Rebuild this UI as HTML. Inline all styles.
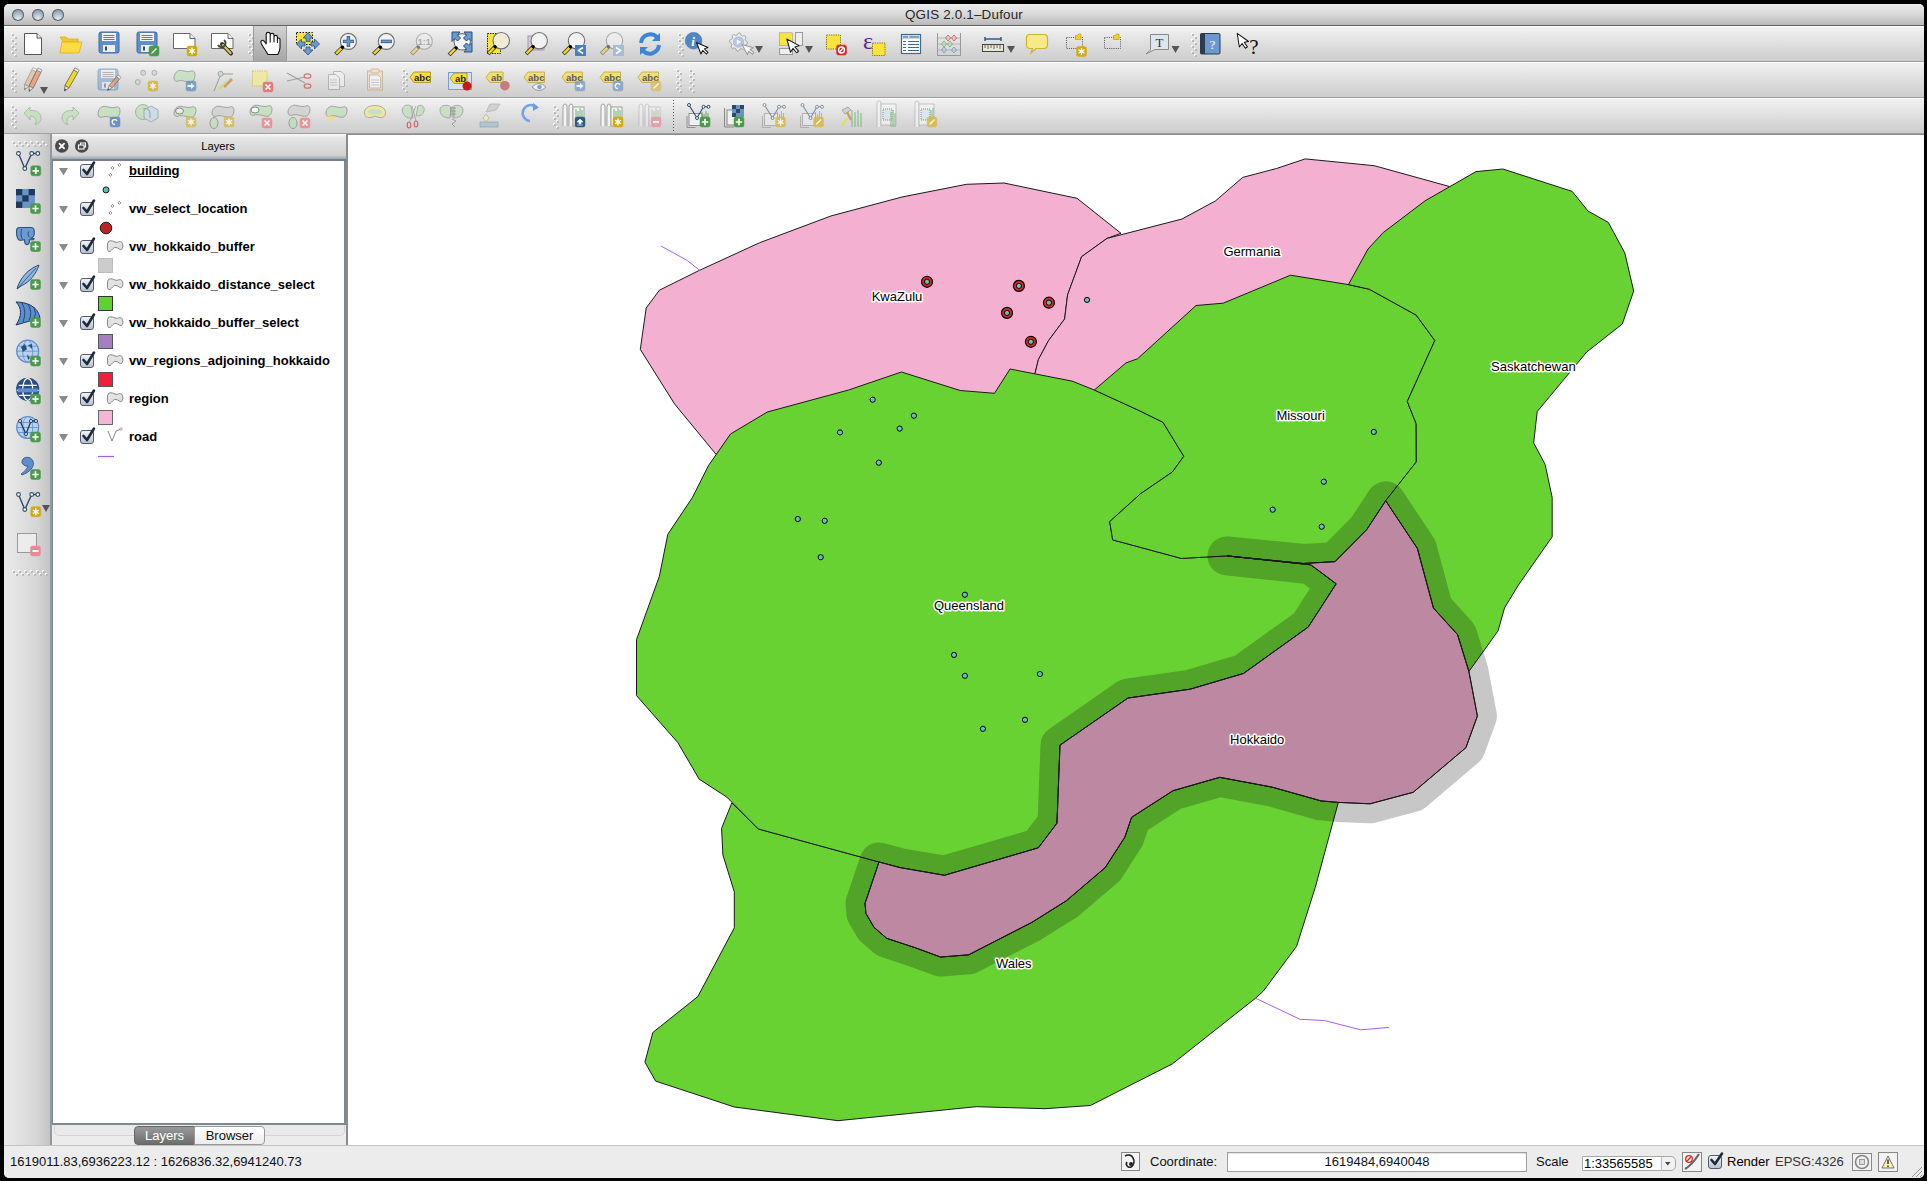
<!DOCTYPE html>
<html><head><meta charset="utf-8">
<style>
*{margin:0;padding:0;box-sizing:border-box}
html,body{width:1927px;height:1181px;overflow:hidden;background:#000;font-family:"Liberation Sans",sans-serif}
.a{position:absolute}
#win{position:absolute;left:4px;top:4px;width:1920px;height:1174px;background:#ececec;border-radius:5px 5px 5px 5px}
#title{position:absolute;left:4px;top:4px;width:1920px;height:22px;background:linear-gradient(#ececec,#d8d8d8 50%,#b9b9b9);border-bottom:1px solid #626262;border-radius:5px 5px 0 0}
#title .t{position:absolute;left:0;width:1920px;top:3px;text-align:center;font-size:13.4px;color:#262626;letter-spacing:0.2px}
.light{position:absolute;top:5px;width:12px;height:12px;border-radius:50%;background:radial-gradient(circle at 50% 80%,#e4eaee 0,#a9b7c1 50%,#6c7d89 100%);box-shadow:0 0 0 1px #56636d inset}
.tb{position:absolute;left:4px;width:1920px;height:36px;background:linear-gradient(#f2f2f2,#dedede 50%,#cdcdcd);border-bottom:1px solid #9e9e9e;border-top:1px solid #fdfdfd}
#ltb{position:absolute;left:4px;top:134px;width:48px;height:1011px;background:linear-gradient(90deg,#ebebeb,#d6d6d6 70%,#c4c4c4);border-right:2px solid #8f9aa6}
#dockh{position:absolute;left:52px;top:134px;width:294px;height:27px;background:linear-gradient(#f8f8f8,#e6e6e6 15%,#d2d2d2 85%,#9aa4ae);border-bottom:2px solid #74808c}
#dockh .t{position:absolute;left:0;width:294px;top:6px;text-align:center;font-size:11.2px;color:#000;padding-left:38px}
#list{position:absolute;left:52px;top:161px;width:294px;height:964px;background:#fff;border-left:1px solid #7d8893;border-right:2px solid #7d8893;border-bottom:2px solid #7d8893}
#tabs{position:absolute;left:52px;top:1125px;width:294px;height:20px;background:#ececec}
#mapbg{position:absolute;left:346px;top:134px;width:1578px;height:1011px;background:#fff;border-left:2px solid #8b8b8b;border-top:1px solid #8b8b8b}
#status{position:absolute;left:4px;top:1145px;width:1920px;height:33px;background:#ececec;border-top:1px solid #c3c3c3;border-radius:0 0 5px 5px}
.lt{position:absolute;left:129px;font-size:13px;font-weight:bold;color:#000;white-space:nowrap}
.st{position:absolute;font-size:13px;color:#111;white-space:nowrap}
</style></head><body>
<div id="win"></div>
<div id="title"><div class="t">QGIS 2.0.1&#8211;Dufour</div>
  <div class="light" style="left:8px"></div><div class="light" style="left:28px"></div><div class="light" style="left:48px"></div>
</div>
<div class="tb" style="top:26px"></div>
<div class="tb" style="top:62px"></div>
<div class="tb" style="top:98px"></div>
<div id="ltb"></div>
<div id="dockh"><div class="t">Layers</div></div>
<div id="list"></div>
<div id="tabs"></div>
<div class="a" style="left:54px;top:1125px;width:291px;height:11px;background:#e9e9e9;border:1px solid #d4d4d4;border-top:none;border-radius:0 0 5px 5px"></div>
<div id="mapbg"></div>
<div id="status"></div>
<div class="st" style="left:10px;top:1154px">1619011.83,6936223.12 : 1626836.32,6941240.73</div>
<div class="st" style="left:1150px;top:1154px">Coordinate:</div>
<div class="a" style="left:1227px;top:1152px;width:300px;height:20px;background:#fff;border:1px solid #a0a0a0;box-shadow:inset 0 1px 1px rgba(0,0,0,.12)"></div>
<div class="st" style="left:1227px;width:300px;text-align:center;top:1154px">1619484,6940048</div>
<div class="st" style="left:1536px;top:1154px">Scale</div>
<div class="a" style="left:1582px;top:1156px;width:94px;height:15px;background:linear-gradient(90deg,#fff 84%,#f2f2f2 84%);border:1px solid #a8a8a8;border-radius:0 5px 5px 0"></div>
<div class="st" style="left:1584px;top:1156px;font-size:13px;color:#000">1:33565585</div>
<div class="st" style="left:1727px;top:1154px;color:#000">Render</div>
<div class="st" style="left:1775px;top:1154px;color:#333">EPSG:4326</div>
<div class="lt" style="top:163px;text-decoration:underline;">building</div>
<div class="lt" style="top:201px;">vw_select_location</div>
<div class="lt" style="top:239px;">vw_hokkaido_buffer</div>
<div class="lt" style="top:277px;">vw_hokkaido_distance_select</div>
<div class="lt" style="top:315px;">vw_hokkaido_buffer_select</div>
<div class="lt" style="top:353px;">vw_regions_adjoining_hokkaido</div>
<div class="lt" style="top:391px;">region</div>
<div class="lt" style="top:429px;">road</div>
<div class="a" style="left:134px;top:1126px;width:61px;height:19px;background:linear-gradient(#9a9a9a,#6c6c6c);border:1px solid #666;border-radius:4px 0 0 4px;color:#fff;font-size:13px;text-align:center;line-height:17px">Layers</div>
<div class="a" style="left:194px;top:1126px;width:71px;height:19px;background:linear-gradient(#ffffff,#ececec);border:1px solid #999;border-radius:0 4px 4px 0;color:#111;font-size:13px;text-align:center;line-height:17px">Browser</div>
<svg class="a" style="left:0;top:0" width="1927" height="1181" viewBox="0 0 1927 1181">
<rect x="11" y="33" width="2" height="2" fill="#fff" opacity=".85"/><rect x="12" y="34" width="2" height="2" fill="#b9b9b9"/><rect x="14" y="36" width="2" height="2" fill="#fff" opacity=".85"/><rect x="15" y="37" width="2" height="2" fill="#b9b9b9"/><rect x="11" y="39" width="2" height="2" fill="#fff" opacity=".85"/><rect x="12" y="40" width="2" height="2" fill="#b9b9b9"/><rect x="14" y="42" width="2" height="2" fill="#fff" opacity=".85"/><rect x="15" y="43" width="2" height="2" fill="#b9b9b9"/><rect x="11" y="45" width="2" height="2" fill="#fff" opacity=".85"/><rect x="12" y="46" width="2" height="2" fill="#b9b9b9"/><rect x="14" y="48" width="2" height="2" fill="#fff" opacity=".85"/><rect x="15" y="49" width="2" height="2" fill="#b9b9b9"/><rect x="11" y="51" width="2" height="2" fill="#fff" opacity=".85"/><rect x="12" y="52" width="2" height="2" fill="#b9b9b9"/><rect x="14" y="54" width="2" height="2" fill="#fff" opacity=".85"/><rect x="15" y="55" width="2" height="2" fill="#b9b9b9"/>
<path d="M24.5,33.5H37L41.5,38V54.5H24.5Z" fill="#fff" stroke="#555"/><path d="M37,33.5V38H41.5" fill="#eee" stroke="#555"/>
<path d="M60,37H66L68,39H78V42H63Z" fill="#f2c829" stroke="#d8b020" stroke-width=".8"/><path d="M62,42H82L79,53H60Z" fill="#fcdb44" stroke="#d8b020" stroke-width=".8"/>
<g opacity="1"><rect x="99" y="32" width="20" height="21" rx="2" fill="#5e8fcd" stroke="#3b6aa8"/><rect x="102" y="33" width="14" height="8" fill="#f4f4f4"/><path d="M103.5,35.5H114.5M103.5,37.5H114.5M103.5,39.5H114.5" stroke="#555" stroke-width=".8"/><rect x="103" y="45" width="12" height="7" fill="#eee"/><rect x="105" y="46.5" width="2" height="4" fill="#2c4c78"/></g>
<g opacity="1"><rect x="137" y="32" width="20" height="21" rx="2" fill="#5e8fcd" stroke="#3b6aa8"/><rect x="140" y="33" width="14" height="8" fill="#f4f4f4"/><path d="M141.5,35.5H152.5M141.5,37.5H152.5M141.5,39.5H152.5" stroke="#555" stroke-width=".8"/><rect x="141" y="45" width="12" height="7" fill="#eee"/><rect x="143" y="46.5" width="2" height="4" fill="#2c4c78"/></g><g opacity="1"><rect x="149" y="46" width="10" height="10" rx="2" fill="#4b9a4b" stroke="#4b9a4b" stroke-width=".5"/><path d="M151,54L152,52L156,48L157,49L153,53Z" fill="#fff"/></g>
<path d="M173.5,33.5H190L195,38.5V48.5H173.5Z" fill="#fff" stroke="#666"/><path d="M190,33.5V38.5H195" fill="#eee" stroke="#666"/><g opacity="1"><rect x="187" y="46" width="10" height="10" rx="2" fill="#d4a90e" stroke="#d4a90e" stroke-width=".5"/><path d="M192,47.5V54.5M189,49.2L195,52.8M195,49.2L189,52.8" stroke="#fff" stroke-width="1.3"/><circle cx="192" cy="51" r="1.8" fill="#fff"/></g>
<path d="M211.5,33.5H228L233,38.5V48.5H211.5Z" fill="#fff" stroke="#666"/><path d="M228,33.5V38.5H233" fill="#eee" stroke="#666"/>
<path d="M222,44L231,53.5" stroke="#333" stroke-width="4" stroke-linecap="round"/><path d="M223,45L230.5,53" stroke="#e6c44a" stroke-width="2.2" stroke-linecap="round"/><path d="M224,40A4,4 0 1 1 218,45" fill="none" stroke="#444" stroke-width="2"/>
<rect x="248" y="33" width="2" height="2" fill="#fff" opacity=".85"/><rect x="249" y="34" width="2" height="2" fill="#b9b9b9"/><rect x="251" y="36" width="2" height="2" fill="#fff" opacity=".85"/><rect x="252" y="37" width="2" height="2" fill="#b9b9b9"/><rect x="248" y="39" width="2" height="2" fill="#fff" opacity=".85"/><rect x="249" y="40" width="2" height="2" fill="#b9b9b9"/><rect x="251" y="42" width="2" height="2" fill="#fff" opacity=".85"/><rect x="252" y="43" width="2" height="2" fill="#b9b9b9"/><rect x="248" y="45" width="2" height="2" fill="#fff" opacity=".85"/><rect x="249" y="46" width="2" height="2" fill="#b9b9b9"/><rect x="251" y="48" width="2" height="2" fill="#fff" opacity=".85"/><rect x="252" y="49" width="2" height="2" fill="#b9b9b9"/><rect x="248" y="51" width="2" height="2" fill="#fff" opacity=".85"/><rect x="249" y="52" width="2" height="2" fill="#b9b9b9"/><rect x="251" y="54" width="2" height="2" fill="#fff" opacity=".85"/><rect x="252" y="55" width="2" height="2" fill="#b9b9b9"/>
<defs><linearGradient id="pg" x1="0" y1="0" x2="0" y2="1"><stop offset="0" stop-color="#d2d2d2"/><stop offset="1" stop-color="#a6a6a6"/></linearGradient></defs>
<rect x="253" y="26" width="34" height="35" fill="url(#pg)"/><path d="M253.5,26V61M286.5,26V61" stroke="#9a9a9a"/>
<path d="M268,54.5 C266,51 263,47 261.2,43.5 C260.2,41 262,39.2 264,41 L266.2,43.8 V34.2 C266.2,31.8 270.2,31.8 270.2,34.2 V42 V35.2 C270.2,32.8 274,32.8 274,35.2 V42 V37 C274,34.8 277.4,34.8 277.4,37 V42.5 V39.5 C277.4,37.6 280,37.6 280,39.5 V47.5 C280,50.5 278.8,52.5 277.8,54.5 Z" fill="#fff" stroke="#111" stroke-width="1.1" stroke-linejoin="round"/>
<rect x="296.5" y="32.5" width="16" height="12" fill="#f8e43a" stroke="#111" stroke-width="1" stroke-dasharray="1.5 1.5"/>
<g fill="#6a9ad0" stroke="#2a4e7e" stroke-width=".8" stroke-linejoin="round"><path d="M308,32.8L313,38H310V41.5H306V38H303Z"/><path d="M296.5,44L301.5,39V42H305V46H301.5V49Z"/><path d="M319.5,44L314.5,39V42H311V46H314.5V49Z"/><path d="M308,55L303,50H306V47H310V50H313Z"/></g>
<g opacity="1"><path d="M342.47999999999996,47.32L335.59999999999997,54.2" stroke="#2b2b3a" stroke-width="4" stroke-linecap="butt"/><path d="M341.67999999999995,48.12L336.09999999999997,53.7" stroke="#f7d21a" stroke-width="2.6"/><circle cx="348.4" cy="41.4" r="8" fill="#f2f2f2" stroke="#6e6e6e" stroke-width="1.1"/><circle cx="342.47999999999996" cy="47.32" r="1.7" fill="#000"/><path d="M348.4,36V47M342.9,41.4H353.9" stroke="#2a4e7e" stroke-width="3.4"/><path d="M348.4,36.6V46.4M343.5,41.4H353.3" stroke="#6a9ad0" stroke-width="2"/></g>
<g opacity="1"><path d="M380.38,47.32L373.5,54.2" stroke="#2b2b3a" stroke-width="4" stroke-linecap="butt"/><path d="M379.58,48.12L374.0,53.7" stroke="#f7d21a" stroke-width="2.6"/><circle cx="386.3" cy="41.4" r="8" fill="#f2f2f2" stroke="#6e6e6e" stroke-width="1.1"/><circle cx="380.38" cy="47.32" r="1.7" fill="#000"/><path d="M380.8,41.4H391.8" stroke="#2a4e7e" stroke-width="3.4"/><path d="M381.4,41.4H391.2" stroke="#6a9ad0" stroke-width="2"/></g>
<g opacity="0.45"><path d="M418.38,47.120000000000005L411.5,54.0" stroke="#2b2b3a" stroke-width="4" stroke-linecap="butt"/><path d="M417.58,47.92L412.0,53.5" stroke="#f7d21a" stroke-width="2.6"/><circle cx="424.3" cy="41.2" r="8" fill="#f2f2f2" stroke="#6e6e6e" stroke-width="1.1"/><circle cx="418.38" cy="47.120000000000005" r="1.7" fill="#000"/><text x="424.3" y="45" font-size="9" font-weight="bold" text-anchor="middle" fill="#666" font-family="Liberation Sans">1:1</text></g>
<g opacity="1"><path d="M456.132,47.867999999999995L449.08,54.919999999999995" stroke="#2b2b3a" stroke-width="4" stroke-linecap="butt"/><path d="M455.332,48.66799999999999L449.58,54.419999999999995" stroke="#f7d21a" stroke-width="2.6"/><circle cx="462.2" cy="41.8" r="8.2" fill="#f2f2f2" stroke="#6e6e6e" stroke-width="1.1"/><circle cx="456.132" cy="47.867999999999995" r="1.7" fill="#000"/></g>
<g fill="#6a9ad0" stroke="#2a4e7e" stroke-width="1" stroke-linejoin="round"><path d="M452,32H460L457.5,35L460.5,38L457.5,41L455,38.5L452,41.5Z"/><path d="M472,32H464L466.5,35L463.5,38L466.5,41L469,38.5L472,41.5Z"/><path d="M472,52H464L466.5,49L463.5,46L466.5,43L469,45.5L472,42.5Z"/></g>
<rect x="487.5" y="33.5" width="13" height="20" fill="#f6e53c" stroke="#222" stroke-dasharray="1.5 1"/><g opacity="1"><path d="M495.132,46.768L488.08,53.82" stroke="#2b2b3a" stroke-width="4" stroke-linecap="butt"/><path d="M494.332,47.568L488.58,53.32" stroke="#f7d21a" stroke-width="2.6"/><circle cx="501.2" cy="40.7" r="8.2" fill="#f2f2f2" stroke="#6e6e6e" stroke-width="1.1"/><circle cx="495.132" cy="46.768" r="1.7" fill="#000"/><circle cx="501.2" cy="40.7" r="7" fill="#efeacc" opacity=".8"/></g>
<rect x="528" y="36" width="16" height="14" fill="#d8c8d8" stroke="#a99aa9"/><g opacity="1"><path d="M533.1320000000001,46.768L526.08,53.82" stroke="#2b2b3a" stroke-width="4" stroke-linecap="butt"/><path d="M532.3320000000001,47.568L526.58,53.32" stroke="#f7d21a" stroke-width="2.6"/><circle cx="539.2" cy="40.7" r="8.2" fill="#f2f2f2" stroke="#6e6e6e" stroke-width="1.1"/><circle cx="533.1320000000001" cy="46.768" r="1.7" fill="#000"/></g>
<g opacity="1"><path d="M570.432,46.768L563.38,53.82" stroke="#2b2b3a" stroke-width="4" stroke-linecap="butt"/><path d="M569.6320000000001,47.568L563.88,53.32" stroke="#f7d21a" stroke-width="2.6"/><circle cx="576.5" cy="40.7" r="8.2" fill="#f2f2f2" stroke="#6e6e6e" stroke-width="1.1"/><circle cx="570.432" cy="46.768" r="1.7" fill="#000"/></g><rect x="575" y="45" width="11" height="11" fill="#4a7fc0"/><path d="M583,47.5L578.5,50.5L583,53.5" fill="none" stroke="#fff" stroke-width="1.6"/>
<g opacity="0.5"><path d="M608.432,46.768L601.38,53.82" stroke="#2b2b3a" stroke-width="4" stroke-linecap="butt"/><path d="M607.6320000000001,47.568L601.88,53.32" stroke="#f7d21a" stroke-width="2.6"/><circle cx="614.5" cy="40.7" r="8.2" fill="#f2f2f2" stroke="#6e6e6e" stroke-width="1.1"/><circle cx="608.432" cy="46.768" r="1.7" fill="#000"/></g><rect x="613" y="45" width="11" height="11" fill="#a3bcdb"/><path d="M616,47.5L620.5,50.5L616,53.5" fill="none" stroke="#fff" stroke-width="1.6"/>
<path d="M641,43 A9.5,9.5 0 0 1 657,37" fill="none" stroke="#3b86d8" stroke-width="4"/><path d="M660,33V41H652Z" fill="#3b86d8"/><path d="M659,45 A9.5,9.5 0 0 1 643,51" fill="none" stroke="#3b86d8" stroke-width="4"/><path d="M640,55V47H648Z" fill="#3b86d8"/>
<rect x="678" y="33" width="2" height="2" fill="#fff" opacity=".85"/><rect x="679" y="34" width="2" height="2" fill="#b9b9b9"/><rect x="681" y="36" width="2" height="2" fill="#fff" opacity=".85"/><rect x="682" y="37" width="2" height="2" fill="#b9b9b9"/><rect x="678" y="39" width="2" height="2" fill="#fff" opacity=".85"/><rect x="679" y="40" width="2" height="2" fill="#b9b9b9"/><rect x="681" y="42" width="2" height="2" fill="#fff" opacity=".85"/><rect x="682" y="43" width="2" height="2" fill="#b9b9b9"/><rect x="678" y="45" width="2" height="2" fill="#fff" opacity=".85"/><rect x="679" y="46" width="2" height="2" fill="#b9b9b9"/><rect x="681" y="48" width="2" height="2" fill="#fff" opacity=".85"/><rect x="682" y="49" width="2" height="2" fill="#b9b9b9"/><rect x="678" y="51" width="2" height="2" fill="#fff" opacity=".85"/><rect x="679" y="52" width="2" height="2" fill="#b9b9b9"/><rect x="681" y="54" width="2" height="2" fill="#fff" opacity=".85"/><rect x="682" y="55" width="2" height="2" fill="#b9b9b9"/>
<circle cx="693.6" cy="40.7" r="8.3" fill="#4f86c6" stroke="#3d6ea8" stroke-width=".6"/><text x="693" y="45.8" font-size="13" font-weight="bold" font-style="italic" text-anchor="middle" fill="#fff" font-family="Liberation Serif" style="text-rendering:geometricPrecision">i</text>
<g opacity="1" transform="translate(696.5,42.5) rotate(-21) scale(0.85)"><path d="M0,0V14.5L3.4,11.3L6,16.8L8.4,15.7L5.9,10.3H10.5Z" fill="#fff" stroke="#111" stroke-width="1.18" stroke-linejoin="round"/></g>
<g opacity=".8"><path d="M747.50,42.00 L747.33,43.76 L745.15,44.76 L744.49,46.00 L744.86,48.36 L743.50,49.48 L741.26,48.65 L739.90,49.06 L738.50,51.00 L736.74,50.83 L735.74,48.65 L734.50,47.99 L732.14,48.36 L731.02,47.00 L731.85,44.76 L731.44,43.40 L729.50,42.00 L729.67,40.24 L731.85,39.24 L732.51,38.00 L732.14,35.64 L733.50,34.52 L735.74,35.35 L737.10,34.94 L738.50,33.00 L740.26,33.17 L741.26,35.35 L742.50,36.01 L744.86,35.64 L745.98,37.00 L745.15,39.24 L745.56,40.60Z" fill="#eeeeee" stroke="#9a9a9a" stroke-width="1" stroke-linejoin="round"/><circle cx="738.5" cy="42" r="5.2" fill="#a9c2e0" stroke="#8aa4c4" stroke-width=".6"/><path d="M736.8,39.2V44.8L741,42Z" fill="#fff"/><g opacity="1" transform="translate(742,44.5) rotate(-28) scale(0.8)"><path d="M0,0V14.5L3.4,11.3L6,16.8L8.4,15.7L5.9,10.3H10.5Z" fill="#fff" stroke="#8a8a8a" stroke-width="1.25" stroke-linejoin="round"/></g></g>
<path d="M755,46H763L759,53Z" fill="#555"/>
<rect x="779.5" y="32.8" width="13" height="12.5" fill="#f8e43a" stroke="#999" stroke-width=".6"/><rect x="795.5" y="32.5" width="7" height="13" fill="#eee" stroke="#999"/><rect x="779.5" y="48.5" width="13" height="6" fill="#eee" stroke="#999"/>
<g opacity="1" transform="translate(786.8,39) rotate(-16) scale(0.95)"><path d="M0,0V14.5L3.4,11.3L6,16.8L8.4,15.7L5.9,10.3H10.5Z" fill="#fff" stroke="#111" stroke-width="1.05" stroke-linejoin="round"/></g>
<path d="M805,46H813L809,53Z" fill="#555"/>
<rect x="826.5" y="35" width="14" height="14" fill="#f8e43a" stroke="#8a7a10" stroke-dasharray="1.3 1"/><g opacity="1"><rect x="836.5" y="45" width="10" height="10" rx="2" fill="#d62828" stroke="#d62828" stroke-width=".5"/><circle cx="841.5" cy="50" r="3" fill="none" stroke="#fff" stroke-width="1.3"/><path d="M839.5,52L843.5,48" stroke="#fff" stroke-width="1.3"/></g>
<text x="863" y="48.5" font-size="24" fill="#5a2a80" font-family="Liberation Serif">&#949;</text><rect x="872.5" y="43" width="12.5" height="12.5" fill="#f8e43a" stroke="#8a7a10" stroke-dasharray="1.3 1"/>
<rect x="901.5" y="34.5" width="19" height="19" fill="#fff" stroke="#3e6a8f" stroke-width="1.2"/><rect x="902" y="35" width="18" height="4" fill="#c6d9ea"/><path d="M903,37H908M909.5,37H919M903,41.5H906M908,41.5H919M903,44.5H906M908,44.5H919M903,47.5H906M908,47.5H919M903,50.5H906M908,50.5H919" stroke="#3e6a8f" stroke-width="1.2"/>
<path d="M937.5,33V55M960.5,33V55M937,55.5H961" stroke="#999" stroke-width="1"/><path d="M938,38H960M938,44H960M938,50H960" stroke="#aaa" stroke-width=".8"/>
<g fill="none" stroke-width="1"><path d="M948,35L950.5,38L948,41L945.5,38Z M954,35L956.5,38L954,41L951.5,38Z" stroke="#d86a6a"/><path d="M944,41L946.5,44L944,47L941.5,44Z M950,41L952.5,44L950,47L947.5,44Z" stroke="#7ac07a"/><path d="M944,47L946.5,50L944,53L941.5,50Z M954,47L956.5,50L954,53L951.5,50Z" stroke="#7aa0d0"/></g>
<rect x="982.5" y="44.5" width="21" height="7" fill="#e8e8d8" stroke="#444"/><path d="M985,45V48M988,45V49M991,45V48M994,45V49M997,45V48M1000,45V49" stroke="#444" stroke-width=".8"/><path d="M985,39H1001M985,37V41M1001,37V41" stroke="#2c5f8a" stroke-width="1.5"/><path d="M1007,46H1015L1011,53Z" fill="#555"/>
<path d="M1030,34.5H1044Q1047.5,34.5 1047.5,38V45Q1047.5,48.5 1044,48.5H1036L1031,53L1032.5,48.5H1030Q1026.5,48.5 1026.5,45V38Q1026.5,34.5 1030,34.5Z" fill="#f6ea86" stroke="#cfb13a" stroke-width="1.2"/>
<rect x="1066.5" y="37.5" width="16" height="11" fill="none" stroke="#444" stroke-width=".9" stroke-dasharray="1 1.2"/><path d="M1075.5,39.5V35.5H1077.5L1078.5,34H1081V39.5Z" fill="#f2d020" stroke="#b89510" stroke-width=".6"/><g opacity="1"><rect x="1076.5" y="46.5" width="10" height="10" rx="2" fill="#d4a90e" stroke="#d4a90e" stroke-width=".5"/><path d="M1081.5,48.0V55.0M1078.5,49.7L1084.5,53.3M1084.5,49.7L1078.5,53.3" stroke="#fff" stroke-width="1.3"/><circle cx="1081.5" cy="51.5" r="1.8" fill="#fff"/></g>
<rect x="1104.5" y="37.5" width="16" height="11" fill="none" stroke="#444" stroke-width=".9" stroke-dasharray="1 1.2"/><path d="M1113.5,39.5V35.5H1115.5L1116.5,34H1119V39.5Z" fill="#f2d020" stroke="#b89510" stroke-width=".6"/>
<path d="M1150.5,34.5H1168.5V49.5H1155L1146,54L1151,49.5H1150.5Z" fill="#dde6ee" stroke="#888"/><text x="1159.5" y="47" font-size="13" text-anchor="middle" fill="#333" font-family="Liberation Serif">T</text><path d="M1171.5,46H1179.5L1175.5,53Z" fill="#555"/>
<rect x="1191" y="33" width="2" height="2" fill="#fff" opacity=".85"/><rect x="1192" y="34" width="2" height="2" fill="#b9b9b9"/><rect x="1194" y="36" width="2" height="2" fill="#fff" opacity=".85"/><rect x="1195" y="37" width="2" height="2" fill="#b9b9b9"/><rect x="1191" y="39" width="2" height="2" fill="#fff" opacity=".85"/><rect x="1192" y="40" width="2" height="2" fill="#b9b9b9"/><rect x="1194" y="42" width="2" height="2" fill="#fff" opacity=".85"/><rect x="1195" y="43" width="2" height="2" fill="#b9b9b9"/><rect x="1191" y="45" width="2" height="2" fill="#fff" opacity=".85"/><rect x="1192" y="46" width="2" height="2" fill="#b9b9b9"/><rect x="1194" y="48" width="2" height="2" fill="#fff" opacity=".85"/><rect x="1195" y="49" width="2" height="2" fill="#b9b9b9"/><rect x="1191" y="51" width="2" height="2" fill="#fff" opacity=".85"/><rect x="1192" y="52" width="2" height="2" fill="#b9b9b9"/><rect x="1194" y="54" width="2" height="2" fill="#fff" opacity=".85"/><rect x="1195" y="55" width="2" height="2" fill="#b9b9b9"/>
<rect x="1200.5" y="33.5" width="19.5" height="20.5" rx="1.2" fill="#6a98d0" stroke="#2a3a4a"/><rect x="1200.5" y="33.5" width="4.5" height="20.5" fill="#2c3c4e"/><text x="1212.5" y="48.5" font-size="13" text-anchor="middle" fill="#fff" font-family="Liberation Serif">?</text>
<g opacity="1" transform="translate(1237.2,33.4) rotate(-9) scale(0.95)"><path d="M0,0V14.5L3.4,11.3L6,16.8L8.4,15.7L5.9,10.3H10.5Z" fill="#fff" stroke="#111" stroke-width="1.05" stroke-linejoin="round"/></g><text x="1254" y="54" font-size="21" text-anchor="middle" fill="#111" font-family="Liberation Serif">?</text>
<rect x="11" y="69" width="2" height="2" fill="#fff" opacity=".85"/><rect x="12" y="70" width="2" height="2" fill="#b9b9b9"/><rect x="14" y="72" width="2" height="2" fill="#fff" opacity=".85"/><rect x="15" y="73" width="2" height="2" fill="#b9b9b9"/><rect x="11" y="75" width="2" height="2" fill="#fff" opacity=".85"/><rect x="12" y="76" width="2" height="2" fill="#b9b9b9"/><rect x="14" y="78" width="2" height="2" fill="#fff" opacity=".85"/><rect x="15" y="79" width="2" height="2" fill="#b9b9b9"/><rect x="11" y="81" width="2" height="2" fill="#fff" opacity=".85"/><rect x="12" y="82" width="2" height="2" fill="#b9b9b9"/><rect x="14" y="84" width="2" height="2" fill="#fff" opacity=".85"/><rect x="15" y="85" width="2" height="2" fill="#b9b9b9"/><rect x="11" y="87" width="2" height="2" fill="#fff" opacity=".85"/><rect x="12" y="88" width="2" height="2" fill="#b9b9b9"/><rect x="14" y="90" width="2" height="2" fill="#fff" opacity=".85"/><rect x="15" y="91" width="2" height="2" fill="#b9b9b9"/>
<g opacity="0.55" stroke-linejoin="round"><path d="M28.76,86.52L35.97,71.76L31.84,69.74L24.63,84.50Z" fill="#e8b090" stroke="#5a5a5a" stroke-width=".8"/><path d="M35.97,71.76L37.07,69.51L32.93,67.49L31.84,69.74Z" fill="#f2f2f2" stroke="#777" stroke-width=".8"/><path d="M24.50,90.00L28.76,86.52L24.63,84.50Z" fill="#e8e0d0" stroke="#666" stroke-width=".8"/><path d="M24.50,90.00L26.28,88.64L24.48,87.76Z" fill="#333"/></g><g opacity="0.8" stroke-linejoin="round"><path d="M33.26,88.02L40.97,72.26L36.84,70.24L29.13,86.00Z" fill="#ec9a6a" stroke="#5a5a5a" stroke-width=".8"/><path d="M40.97,72.26L42.07,70.01L37.93,67.99L36.84,70.24Z" fill="#f2f2f2" stroke="#777" stroke-width=".8"/><path d="M29.00,91.50L33.26,88.02L29.13,86.00Z" fill="#e8e0d0" stroke="#666" stroke-width=".8"/><path d="M29.00,91.50L30.78,90.14L28.98,89.26Z" fill="#333"/></g><path d="M40,87H48L44,94Z" fill="#555"/>
<g opacity="1" stroke-linejoin="round"><path d="M69.06,87.84L77.85,72.36L73.68,69.99L64.88,85.47Z" fill="#f0d820" stroke="#5a5a5a" stroke-width=".8"/><path d="M77.85,72.36L79.09,70.19L74.91,67.81L73.68,69.99Z" fill="#f2f2f2" stroke="#777" stroke-width=".8"/><path d="M64.50,91.00L69.06,87.84L64.88,85.47Z" fill="#e8e0d0" stroke="#666" stroke-width=".8"/><path d="M64.50,91.00L66.36,89.76L64.62,88.77Z" fill="#333"/></g>
<g opacity="0.45"><rect x="98" y="69" width="20" height="21" rx="2" fill="#5e8fcd" stroke="#3b6aa8"/><rect x="101" y="70" width="14" height="8" fill="#f4f4f4"/><path d="M102.5,72.5H113.5M102.5,74.5H113.5M102.5,76.5H113.5" stroke="#555" stroke-width=".8"/><rect x="102" y="82" width="12" height="7" fill="#eee"/><rect x="104" y="83.5" width="2" height="4" fill="#2c4c78"/></g><g opacity="0.8" stroke-linejoin="round"><path d="M112.15,87.86L119.37,79.14L116.44,76.71L109.22,85.44Z" fill="#ec9a6a" stroke="#5a5a5a" stroke-width=".8"/><path d="M119.37,79.14L120.96,77.21L118.04,74.79L116.44,76.71Z" fill="#f2f2f2" stroke="#777" stroke-width=".8"/><path d="M107.50,90.50L112.15,87.86L109.22,85.44Z" fill="#e8e0d0" stroke="#666" stroke-width=".8"/><path d="M107.50,90.50L109.55,89.60L108.00,88.32Z" fill="#333"/></g>
<g opacity=".6" fill="#bfe0b8" stroke="#777" stroke-width=".8"><circle cx="143.2" cy="72.8" r="2.5"/><circle cx="154.4" cy="72.8" r="2.5"/><circle cx="137.8" cy="82.1" r="2.5"/></g><g opacity="0.65"><rect x="148" y="81" width="10" height="10" rx="2" fill="#d4a90e" stroke="#d4a90e" stroke-width=".5"/><path d="M153,82.5V89.5M150,84.2L156,87.8M156,84.2L150,87.8" stroke="#fff" stroke-width="1.3"/><circle cx="153" cy="86" r="1.8" fill="#fff"/></g>
<path opacity="0.7" d="M177,71.6 C180.3,68 185.55,73.55 191.85,70.95 C196.05,69.65 196.05,79.4 191.85,82 C186.6,83.3 183.45,78.75 177.15,81.35 C173,82 173,74.2 177,71.6Z" fill="#bfe0b8" stroke="#8a8a8a" stroke-width="1"/><g opacity="0.7"><rect x="186" y="81" width="10" height="10" rx="2" fill="#5a86bf" stroke="#5a86bf" stroke-width=".5"/><path d="M187.5,85H191V83L194.5,86L191,89V87H187.5Z" fill="#fff"/></g>
<g opacity=".7"><path d="M214,91L221,74L233,74" stroke="#666" fill="none" stroke-width=".8"/><circle cx="220.5" cy="73.8" r="2.5" fill="#bfe0b8" stroke="#888"/><path d="M224,87L232,79" stroke="#c48a3a" stroke-width="3"/><path d="M219,89L226,82" stroke="#e0d050" stroke-width="2"/></g>
<rect x="252.5" y="71" width="14.5" height="15" fill="#f2ea9a" stroke="#c8b840" stroke-dasharray="1.3 1" opacity=".8"/><g opacity="1"><rect x="263" y="82" width="10" height="10" rx="2" fill="#e87878" stroke="#e87878" stroke-width=".5"/><path d="M265.5,84.5L270.5,89.5M270.5,84.5L265.5,89.5" stroke="#fff" stroke-width="1.6"/></g>
<g opacity=".7"><path d="M287,73L305,83M287,81L305,77" stroke="#888" stroke-width="1.2"/><ellipse cx="307.5" cy="76" rx="3.3" ry="2.2" fill="none" stroke="#d05050" stroke-width="1.3"/><ellipse cx="307.5" cy="86" rx="3.3" ry="2.2" fill="none" stroke="#d05050" stroke-width="1.3"/></g>
<g opacity=".55" fill="#f6f6f6" stroke="#888" stroke-width=".9"><path d="M333.5,71.5H341L344.5,75V86.5H333.5Z"/><path d="M328.5,74.5H336L339.5,78V89.5H328.5Z"/><path d="M330,80H337M330,82.5H337M330,85H337" stroke-width=".6"/></g>
<g opacity=".6"><rect x="367.5" y="71" width="15" height="19" fill="#f0dcc0" stroke="#c89a5a"/><rect x="371" y="69" width="8" height="4" rx="1" fill="#f0dcc0" stroke="#c89a5a"/><path d="M369.5,75H378L380.5,77.5V88H369.5Z" fill="#fff" stroke="#888" stroke-width=".7"/><path d="M371,80H379M371,82.5H379M371,85H379" stroke="#888" stroke-width=".6"/></g>
<rect x="402" y="69" width="2" height="2" fill="#fff" opacity=".85"/><rect x="403" y="70" width="2" height="2" fill="#b9b9b9"/><rect x="405" y="72" width="2" height="2" fill="#fff" opacity=".85"/><rect x="406" y="73" width="2" height="2" fill="#b9b9b9"/><rect x="402" y="75" width="2" height="2" fill="#fff" opacity=".85"/><rect x="403" y="76" width="2" height="2" fill="#b9b9b9"/><rect x="405" y="78" width="2" height="2" fill="#fff" opacity=".85"/><rect x="406" y="79" width="2" height="2" fill="#b9b9b9"/><rect x="402" y="81" width="2" height="2" fill="#fff" opacity=".85"/><rect x="403" y="82" width="2" height="2" fill="#b9b9b9"/><rect x="405" y="84" width="2" height="2" fill="#fff" opacity=".85"/><rect x="406" y="85" width="2" height="2" fill="#b9b9b9"/><rect x="402" y="87" width="2" height="2" fill="#fff" opacity=".85"/><rect x="403" y="88" width="2" height="2" fill="#b9b9b9"/><rect x="405" y="90" width="2" height="2" fill="#fff" opacity=".85"/><rect x="406" y="91" width="2" height="2" fill="#b9b9b9"/>
<g opacity="1"><path d="M414,72H430.5V82.5H414L410,77.25Z" fill="#f6df3a" stroke="#a88a10" stroke-width=".8"/><text x="422.25" y="80.8" font-size="9.5" font-weight="bold" text-anchor="middle" fill="#222" font-family="Liberation Sans">abc</text></g>
<rect x="448.5" y="72.5" width="23" height="17" fill="#d6e3f2" stroke="#6f9ee0"/><g opacity="1"><path d="M454,73H467V83.5H454L450,78.25Z" fill="#f6df3a" stroke="#a88a10" stroke-width=".8"/><text x="460.5" y="81.8" font-size="9.5" font-weight="bold" text-anchor="middle" fill="#222" font-family="Liberation Sans">ab</text></g><circle cx="467" cy="86" r="4.5" fill="#c41a1a"/>
<g opacity="0.7"><path d="M490,72H503V82.5H490L486,77.25Z" fill="#f6df3a" stroke="#a88a10" stroke-width=".8"/><text x="496.5" y="80.8" font-size="9.5" font-weight="bold" text-anchor="middle" fill="#222" font-family="Liberation Sans">ab</text></g><circle cx="504.9" cy="85.7" r="4.8" fill="#c87070" opacity=".9"/>
<g opacity="0.7"><path d="M528,72H544.5V82.5H528L524,77.25Z" fill="#f6df3a" stroke="#a88a10" stroke-width=".8"/><text x="536.25" y="80.8" font-size="9.5" font-weight="bold" text-anchor="middle" fill="#222" font-family="Liberation Sans">abc</text></g><g opacity=".7"><path d="M532,87Q539,80 546,87Q539,94 532,87Z" fill="#fff" stroke="#666" stroke-width=".8"/><circle cx="539.5" cy="87" r="2.3" fill="#5b8fd0"/></g>
<g opacity="0.7"><path d="M566,72H582.5V82.5H566L562,77.25Z" fill="#f6df3a" stroke="#a88a10" stroke-width=".8"/><text x="574.25" y="80.8" font-size="9.5" font-weight="bold" text-anchor="middle" fill="#222" font-family="Liberation Sans">abc</text></g><g opacity="0.8"><rect x="575" y="81" width="10" height="10" rx="2" fill="#7d9fcf" stroke="#7d9fcf" stroke-width=".5"/><path d="M576.5,85H580V83L583.5,86L580,89V87H576.5Z" fill="#fff"/></g>
<g opacity="0.7"><path d="M604,72H620.5V82.5H604L600,77.25Z" fill="#f6df3a" stroke="#a88a10" stroke-width=".8"/><text x="612.25" y="80.8" font-size="9.5" font-weight="bold" text-anchor="middle" fill="#222" font-family="Liberation Sans">abc</text></g><g opacity="0.8"><rect x="613" y="81" width="10" height="10" rx="2" fill="#7d9fcf" stroke="#7d9fcf" stroke-width=".5"/><path d="M620,85A2.5,2.5 0 1 0 618,88.5" fill="none" stroke="#fff" stroke-width="1.3"/></g>
<g opacity="0.7"><path d="M642,72H658.5V82.5H642L638,77.25Z" fill="#f6df3a" stroke="#a88a10" stroke-width=".8"/><text x="650.25" y="80.8" font-size="9.5" font-weight="bold" text-anchor="middle" fill="#222" font-family="Liberation Sans">abc</text></g><g opacity="0.8"><rect x="651" y="81" width="10" height="10" rx="2" fill="#d8c060" stroke="#d8c060" stroke-width=".5"/><path d="M653,89L654,87L658,83L659,84L655,88Z" fill="#fff"/></g>
<rect x="676" y="69" width="2" height="2" fill="#fff" opacity=".85"/><rect x="677" y="70" width="2" height="2" fill="#b9b9b9"/><rect x="679" y="72" width="2" height="2" fill="#fff" opacity=".85"/><rect x="680" y="73" width="2" height="2" fill="#b9b9b9"/><rect x="676" y="75" width="2" height="2" fill="#fff" opacity=".85"/><rect x="677" y="76" width="2" height="2" fill="#b9b9b9"/><rect x="679" y="78" width="2" height="2" fill="#fff" opacity=".85"/><rect x="680" y="79" width="2" height="2" fill="#b9b9b9"/><rect x="676" y="81" width="2" height="2" fill="#fff" opacity=".85"/><rect x="677" y="82" width="2" height="2" fill="#b9b9b9"/><rect x="679" y="84" width="2" height="2" fill="#fff" opacity=".85"/><rect x="680" y="85" width="2" height="2" fill="#b9b9b9"/><rect x="676" y="87" width="2" height="2" fill="#fff" opacity=".85"/><rect x="677" y="88" width="2" height="2" fill="#b9b9b9"/><rect x="679" y="90" width="2" height="2" fill="#fff" opacity=".85"/><rect x="680" y="91" width="2" height="2" fill="#b9b9b9"/><rect x="689" y="69" width="2" height="2" fill="#fff" opacity=".85"/><rect x="690" y="70" width="2" height="2" fill="#b9b9b9"/><rect x="692" y="72" width="2" height="2" fill="#fff" opacity=".85"/><rect x="693" y="73" width="2" height="2" fill="#b9b9b9"/><rect x="689" y="75" width="2" height="2" fill="#fff" opacity=".85"/><rect x="690" y="76" width="2" height="2" fill="#b9b9b9"/><rect x="692" y="78" width="2" height="2" fill="#fff" opacity=".85"/><rect x="693" y="79" width="2" height="2" fill="#b9b9b9"/><rect x="689" y="81" width="2" height="2" fill="#fff" opacity=".85"/><rect x="690" y="82" width="2" height="2" fill="#b9b9b9"/><rect x="692" y="84" width="2" height="2" fill="#fff" opacity=".85"/><rect x="693" y="85" width="2" height="2" fill="#b9b9b9"/><rect x="689" y="87" width="2" height="2" fill="#fff" opacity=".85"/><rect x="690" y="88" width="2" height="2" fill="#b9b9b9"/><rect x="692" y="90" width="2" height="2" fill="#fff" opacity=".85"/><rect x="693" y="91" width="2" height="2" fill="#b9b9b9"/>
<rect x="11" y="105" width="2" height="2" fill="#fff" opacity=".85"/><rect x="12" y="106" width="2" height="2" fill="#b9b9b9"/><rect x="14" y="108" width="2" height="2" fill="#fff" opacity=".85"/><rect x="15" y="109" width="2" height="2" fill="#b9b9b9"/><rect x="11" y="111" width="2" height="2" fill="#fff" opacity=".85"/><rect x="12" y="112" width="2" height="2" fill="#b9b9b9"/><rect x="14" y="114" width="2" height="2" fill="#fff" opacity=".85"/><rect x="15" y="115" width="2" height="2" fill="#b9b9b9"/><rect x="11" y="117" width="2" height="2" fill="#fff" opacity=".85"/><rect x="12" y="118" width="2" height="2" fill="#b9b9b9"/><rect x="14" y="120" width="2" height="2" fill="#fff" opacity=".85"/><rect x="15" y="121" width="2" height="2" fill="#b9b9b9"/><rect x="11" y="123" width="2" height="2" fill="#fff" opacity=".85"/><rect x="12" y="124" width="2" height="2" fill="#b9b9b9"/><rect x="14" y="126" width="2" height="2" fill="#fff" opacity=".85"/><rect x="15" y="127" width="2" height="2" fill="#b9b9b9"/>
<g opacity=".75" fill="#bfe0b8" stroke="#8aa888" stroke-width=".8"><path d="M24,113L30,107V110.5C37,110 41,113 41,118C41,122 38,124 35,124.5C37,122 37,116 30,116V120Z"/><path d="M79,113L73,107V110.5C66,110 62,113 62,118C62,122 65,124 68,124.5C66,122 66,116 73,116V120Z"/></g>
<path opacity="0.75" d="M101,107.6 C104.6,104 110.1,109.55 116.7,106.95 C121.1,105.65 121.1,115.4 116.7,118 C111.2,119.3 107.9,114.75 101.3,117.35 C97,118 97,110.2 101,107.6Z" fill="#bfe0b8" stroke="#8a8a8a" stroke-width="1"/><g opacity="0.85"><rect x="110" y="117" width="10" height="10" rx="2" fill="#5a86bf" stroke="#5a86bf" stroke-width=".5"/><path d="M117,121A2.5,2.5 0 1 0 115,124.5" fill="none" stroke="#fff" stroke-width="1.3"/></g>
<g opacity=".75"><circle cx="143" cy="112" r="7.5" fill="#bfe0b8" stroke="#8aa888"/><path d="M144,110L151,106L158,110V118L151,122L144,118Z" fill="#c6dae6" stroke="#8aa0b0"/><path d="M143,109Q151,106 150,118" fill="none" stroke="#777" stroke-width=".8"/></g>
<path opacity="0.75" d="M177,107.4 C180.6,104 186.1,109.2 192.7,106.8 C197.1,105.6 197.1,114.6 192.7,117 C187.2,118.2 183.9,114.0 177.3,116.4 C173,117 173,109.8 177,107.4Z" fill="#bfe0b8" stroke="#8a8a8a" stroke-width="1"/><ellipse cx="179.5" cy="111" rx="4" ry="3" fill="#eee" stroke="#777" opacity=".8"/><g opacity="0.75"><rect x="186" y="117" width="10" height="10" rx="2" fill="#d8b840" stroke="#d8b840" stroke-width=".5"/><path d="M191,118.5V125.5M188,120.2L194,123.8M194,120.2L188,123.8" stroke="#fff" stroke-width="1.3"/><circle cx="191" cy="122" r="1.8" fill="#fff"/></g>
<path opacity="0.75" d="M215,107.4 C218.6,104 224.1,109.2 230.7,106.8 C235.1,105.6 235.1,114.6 230.7,117 C225.2,118.2 221.9,114.0 215.3,116.4 C211,117 211,109.8 215,107.4Z" fill="#cfcfcf" stroke="#8a8a8a" stroke-width="1"/><ellipse cx="214" cy="123" rx="4" ry="5.5" fill="#bfe0b8" stroke="#888" opacity=".75"/><g opacity="0.75"><rect x="224" y="117" width="10" height="10" rx="2" fill="#d8b840" stroke="#d8b840" stroke-width=".5"/><path d="M229,118.5V125.5M226,120.2L232,123.8M232,120.2L226,123.8" stroke="#fff" stroke-width="1.3"/><circle cx="229" cy="122" r="1.8" fill="#fff"/></g>
<path opacity="0.75" d="M253,106.4 C256.6,103 262.1,108.2 268.7,105.8 C273.1,104.6 273.1,113.6 268.7,116 C263.2,117.2 259.9,113.0 253.3,115.4 C249,116 249,108.8 253,106.4Z" fill="#bfe0b8" stroke="#8a8a8a" stroke-width="1"/><ellipse cx="255" cy="110" rx="4" ry="3" fill="#fff" stroke="#777" opacity=".8"/><g opacity="0.85"><rect x="262" y="118" width="10" height="10" rx="2" fill="#e88a8a" stroke="#e88a8a" stroke-width=".5"/><path d="M264.5,120.5L269.5,125.5M269.5,120.5L264.5,125.5" stroke="#fff" stroke-width="1.6"/></g>
<path opacity="0.75" d="M291,106.4 C294.6,103 300.1,108.2 306.7,105.8 C311.1,104.6 311.1,113.6 306.7,116 C301.2,117.2 297.9,113.0 291.3,115.4 C287,116 287,108.8 291,106.4Z" fill="#cfcfcf" stroke="#8a8a8a" stroke-width="1"/><ellipse cx="293" cy="123" rx="4" ry="5.5" fill="#bfe0b8" stroke="#888" opacity=".75"/><g opacity="0.85"><rect x="300" y="118" width="10" height="10" rx="2" fill="#e88a8a" stroke="#e88a8a" stroke-width=".5"/><path d="M302.5,120.5L307.5,125.5M307.5,120.5L302.5,125.5" stroke="#fff" stroke-width="1.6"/></g>
<path opacity="0.75" d="M329,107.4 C332.3,104 337.55,109.2 343.85,106.8 C348.05,105.6 348.05,114.6 343.85,117 C338.6,118.2 335.45,114.0 329.15,116.4 C325,117 325,109.8 329,107.4Z" fill="#bfe0b8" stroke="#8a8a8a" stroke-width="1"/><path d="M327,114L330,122L335,117Z" fill="#f0e070" opacity=".8"/>
<g opacity=".75"><path d="M365,110C368,104 382,104 385,110C387,116 383,120 375,116C367,120 363,116 365,110Z" fill="#f6ea86" stroke="#999"/><path d="M368,111C370,108 380,108 382,111C383,114 380,116 375,114C370,116 367,114 368,111Z" fill="#bfe0b8"/></g>
<g opacity=".75"><path d="M402,110C403,105 408,104 411,106L413,118C409,119 403,117 402,110Z M418,106C422,104 425,107 424,111C423,115 420,116 416,116Z" fill="#bfe0b8" stroke="#999"/><ellipse cx="409" cy="125" rx="1.8" ry="3" fill="none" stroke="#d04040" stroke-width="1.2"/><ellipse cx="416" cy="124" rx="1.8" ry="3" fill="none" stroke="#d04040" stroke-width="1.2"/><path d="M412,106L416,121M416,106L410,121" stroke="#888" stroke-width=".8"/></g>
<g opacity=".75"><path d="M440,110C440,105 447,104 451,107L450,118C445,118 440,116 440,110Z M452,107C456,104 463,105 463,110C463,116 458,118 453,118Z" fill="#bfe0b8" stroke="#999"/><path d="M450,108H456M450,111H456M450,114H456M451,107V117M454,107V117M452,119L456,121L452,124L455,127" fill="none" stroke="#777" stroke-width=".8"/></g>
<g opacity=".8"><rect x="480" y="122" width="18" height="5" fill="#a8c0d0" stroke="#7890a0" stroke-width=".6"/><path d="M486,114L489,118L486,122L483,118Z" fill="#f0f0b0" stroke="#888" stroke-width=".5"/><path d="M486,112L490,104H500L496,110Z" fill="#ccc" stroke="#999" stroke-width=".6"/></g>
<path d="M530,121A8,8 0 1 1 536,107" fill="none" stroke="#6a9ae8" stroke-width="2.6" opacity=".9"/><path d="M533,103L539,107.5L533,111Z" fill="#6a9ae8"/>
<rect x="553" y="105" width="2" height="2" fill="#fff" opacity=".85"/><rect x="554" y="106" width="2" height="2" fill="#b9b9b9"/><rect x="556" y="108" width="2" height="2" fill="#fff" opacity=".85"/><rect x="557" y="109" width="2" height="2" fill="#b9b9b9"/><rect x="553" y="111" width="2" height="2" fill="#fff" opacity=".85"/><rect x="554" y="112" width="2" height="2" fill="#b9b9b9"/><rect x="556" y="114" width="2" height="2" fill="#fff" opacity=".85"/><rect x="557" y="115" width="2" height="2" fill="#b9b9b9"/><rect x="553" y="117" width="2" height="2" fill="#fff" opacity=".85"/><rect x="554" y="118" width="2" height="2" fill="#b9b9b9"/><rect x="556" y="120" width="2" height="2" fill="#fff" opacity=".85"/><rect x="557" y="121" width="2" height="2" fill="#b9b9b9"/><rect x="553" y="123" width="2" height="2" fill="#fff" opacity=".85"/><rect x="554" y="124" width="2" height="2" fill="#b9b9b9"/><rect x="556" y="126" width="2" height="2" fill="#fff" opacity=".85"/><rect x="557" y="127" width="2" height="2" fill="#b9b9b9"/>
<g opacity="1"><path d="M563,126V107Q563,104 565,104 Q567,104 567,107V126" fill="#f4f4f4" stroke="#999" stroke-width=".9"/><path d="M569,126V107Q569,104 571,104 Q573,104 573,107V126" fill="#f4f4f4" stroke="#999" stroke-width=".9"/><rect x="573" y="107" width="11" height="19" fill="#f4f4f4" stroke="#999" stroke-width=".9"/><path d="M576,118V109M578,118V111M580,118V108M582,118V110" stroke="#4e9a4e" stroke-width=".8"/></g><g opacity="1"><rect x="575" y="117" width="10" height="10" rx="2" fill="#2d5a80" stroke="#2d5a80" stroke-width=".5"/><path d="M580,119L583,122H581V124H579V122H577Z M577,125H583" fill="#fff" stroke="#fff" stroke-width=".6"/></g>
<g opacity="1"><path d="M601,126V107Q601,104 603,104 Q605,104 605,107V126" fill="#f4f4f4" stroke="#999" stroke-width=".9"/><path d="M607,126V107Q607,104 609,104 Q611,104 611,107V126" fill="#f4f4f4" stroke="#999" stroke-width=".9"/><rect x="611" y="107" width="11" height="19" fill="#f4f4f4" stroke="#999" stroke-width=".9"/><path d="M614,118V109M616,118V111M618,118V108M620,118V110" stroke="#4e9a4e" stroke-width=".8"/></g><g opacity="1"><rect x="613" y="117" width="10" height="10" rx="2" fill="#d4a90e" stroke="#d4a90e" stroke-width=".5"/><path d="M618,118.5V125.5M615,120.2L621,123.8M621,120.2L615,123.8" stroke="#fff" stroke-width="1.3"/><circle cx="618" cy="122" r="1.8" fill="#fff"/></g>
<g opacity="0.45"><path d="M639,126V107Q639,104 641,104 Q643,104 643,107V126" fill="#f4f4f4" stroke="#999" stroke-width=".9"/><path d="M645,126V107Q645,104 647,104 Q649,104 649,107V126" fill="#f4f4f4" stroke="#999" stroke-width=".9"/><rect x="649" y="107" width="11" height="19" fill="#f4f4f4" stroke="#999" stroke-width=".9"/><path d="M652,118V109M654,118V111M656,118V108M658,118V110" stroke="#4e9a4e" stroke-width=".8"/></g><g opacity="1"><rect x="651" y="117" width="10" height="10" rx="2" fill="#e8a0a8" stroke="#e8a0a8" stroke-width=".5"/><path d="M653,122H659" stroke="#fff" stroke-width="2"/></g>
<path d="M673.5,100V132" stroke="#555" stroke-dasharray="1 2"/>
<g opacity="1"><path d="M687.0,116V127.5H695.5" fill="none" stroke="#888" stroke-width=".9"/><rect x="689.0" y="113.5" width="13" height="12" fill="#f0f0f0" stroke="#888" stroke-width=".9"/><path d="M689.0,105L697.0,118L703.5,106.8H708.5" fill="none" stroke="#2c4c6a" stroke-width="1.1"/><circle cx="689.0" cy="105" r="1.5" fill="#fff" stroke="#2c4c6a"/><circle cx="697.0" cy="118" r="1.5" fill="#fff" stroke="#2c4c6a"/><circle cx="703.5" cy="106.8" r="1.5" fill="#fff" stroke="#2c4c6a"/><circle cx="708.5" cy="106.8" r="1.5" fill="#fff" stroke="#2c4c6a"/><path d="M702.0,122V112M704.0,122V114M706.0,122V111M708.0,122V113" stroke="#5aa05a" stroke-width=".9"/></g><g opacity="1"><rect x="700" y="117" width="10" height="10" rx="2" fill="#4b9a4b" stroke="#4b9a4b" stroke-width=".5"/><path d="M705,118.8V125.2M701.8,122H708.2" stroke="#fff" stroke-width="1.7"/></g>
<path d="M724.5,108V127H734" fill="none" stroke="#888"/><rect x="727" y="110" width="14" height="15" fill="#f0f0f0" stroke="#888"/><rect x="732" y="105" width="12" height="12" fill="#6b93bd"/><rect x="732" y="105" width="4" height="4" fill="#2a4a6a"/><rect x="740" y="105" width="4" height="4" fill="#2a4a6a"/><rect x="736" y="109" width="4" height="4" fill="#2a4a6a"/><rect x="732" y="113" width="4" height="4" fill="#2a4a6a"/><g opacity="1"><rect x="734" y="117" width="10" height="10" rx="2" fill="#4b9a4b" stroke="#4b9a4b" stroke-width=".5"/><path d="M739,118.8V125.2M735.8,122H742.2" stroke="#fff" stroke-width="1.7"/></g>
<g opacity="0.55"><path d="M762.5,116V127.5H771" fill="none" stroke="#888" stroke-width=".9"/><rect x="764.5" y="113.5" width="13" height="12" fill="#f0f0f0" stroke="#888" stroke-width=".9"/><path d="M764.5,105L772.5,118L779,106.8H784" fill="none" stroke="#2c4c6a" stroke-width="1.1"/><circle cx="764.5" cy="105" r="1.5" fill="#fff" stroke="#2c4c6a"/><circle cx="772.5" cy="118" r="1.5" fill="#fff" stroke="#2c4c6a"/><circle cx="779" cy="106.8" r="1.5" fill="#fff" stroke="#2c4c6a"/><circle cx="784" cy="106.8" r="1.5" fill="#fff" stroke="#2c4c6a"/><path d="M777.5,122V112M779.5,122V114M781.5,122V111M783.5,122V113" stroke="#5aa05a" stroke-width=".9"/></g><g opacity="0.8"><rect x="775.5" y="117" width="10" height="10" rx="2" fill="#d8b840" stroke="#d8b840" stroke-width=".5"/><path d="M780.5,118.5V125.5M777.5,120.2L783.5,123.8M783.5,120.2L777.5,123.8" stroke="#fff" stroke-width="1.3"/><circle cx="780.5" cy="122" r="1.8" fill="#fff"/></g>
<g opacity="0.55"><path d="M800.5,116V127.5H809" fill="none" stroke="#888" stroke-width=".9"/><rect x="802.5" y="113.5" width="13" height="12" fill="#f0f0f0" stroke="#888" stroke-width=".9"/><path d="M802.5,105L810.5,118L817,106.8H822" fill="none" stroke="#2c4c6a" stroke-width="1.1"/><circle cx="802.5" cy="105" r="1.5" fill="#fff" stroke="#2c4c6a"/><circle cx="810.5" cy="118" r="1.5" fill="#fff" stroke="#2c4c6a"/><circle cx="817" cy="106.8" r="1.5" fill="#fff" stroke="#2c4c6a"/><circle cx="822" cy="106.8" r="1.5" fill="#fff" stroke="#2c4c6a"/><path d="M815.5,122V112M817.5,122V114M819.5,122V111M821.5,122V113" stroke="#5aa05a" stroke-width=".9"/></g><g opacity="0.8"><rect x="813.5" y="117" width="10" height="10" rx="2" fill="#d8b840" stroke="#d8b840" stroke-width=".5"/><path d="M815.5,125L816.5,123L820.5,119L821.5,120L817.5,124Z" fill="#fff"/></g>
<g opacity=".75"><path d="M842,110L848,107L851,110L845,114Z" fill="#ccc" stroke="#777" stroke-width=".7"/><path d="M847,112L851,120" stroke="#c48a3a" stroke-width="2.5"/><path d="M842,126L847,118" stroke="#e0e050" stroke-width="2.5"/><path d="M852,110V127M855,112V127M858,110V127M861,113V127" stroke="#6ab06a" stroke-width="1.1"/></g>
<g opacity=".75"><path d="M877,127V103Q877,101 879,101Q881,101 881,103V127" fill="#f4f4f4" stroke="#aaa" stroke-width=".8"/><rect x="881" y="104" width="15" height="21" fill="#f4f4f4" stroke="#aaa" stroke-width=".8"/><rect x="883" y="109" width="9" height="11" fill="#d6e8f2" stroke="#333" stroke-dasharray="1 1" stroke-width=".7"/><path d="M891,127V112M893,127V110M895,127V113" stroke="#6ab06a" stroke-width="1.1"/></g>
<g opacity=".75"><path d="M915,127V103Q915,101 917,101Q919,101 919,103V127" fill="#f4f4f4" stroke="#aaa" stroke-width=".8"/><rect x="919" y="104" width="15" height="21" fill="#f4f4f4" stroke="#aaa" stroke-width=".8"/><rect x="921" y="109" width="9" height="11" fill="#d6e8f2" stroke="#333" stroke-dasharray="1 1" stroke-width=".7"/><path d="M931,122V110M933,122V108" stroke="#6ab06a" stroke-width="1.1"/></g><g opacity="0.8"><rect x="927" y="117" width="10" height="10" rx="2" fill="#d8b840" stroke="#d8b840" stroke-width=".5"/><path d="M929,125L930,123L934,119L935,120L931,124Z" fill="#fff"/></g>
<rect x="12" y="141" width="2" height="2" fill="#fff" opacity=".85"/><rect x="13" y="142" width="2" height="2" fill="#b9b9b9"/><rect x="15" y="144" width="2" height="2" fill="#fff" opacity=".85"/><rect x="16" y="145" width="2" height="2" fill="#b9b9b9"/><rect x="18" y="141" width="2" height="2" fill="#fff" opacity=".85"/><rect x="19" y="142" width="2" height="2" fill="#b9b9b9"/><rect x="21" y="144" width="2" height="2" fill="#fff" opacity=".85"/><rect x="22" y="145" width="2" height="2" fill="#b9b9b9"/><rect x="24" y="141" width="2" height="2" fill="#fff" opacity=".85"/><rect x="25" y="142" width="2" height="2" fill="#b9b9b9"/><rect x="27" y="144" width="2" height="2" fill="#fff" opacity=".85"/><rect x="28" y="145" width="2" height="2" fill="#b9b9b9"/><rect x="30" y="141" width="2" height="2" fill="#fff" opacity=".85"/><rect x="31" y="142" width="2" height="2" fill="#b9b9b9"/><rect x="33" y="144" width="2" height="2" fill="#fff" opacity=".85"/><rect x="34" y="145" width="2" height="2" fill="#b9b9b9"/><rect x="36" y="141" width="2" height="2" fill="#fff" opacity=".85"/><rect x="37" y="142" width="2" height="2" fill="#b9b9b9"/><rect x="39" y="144" width="2" height="2" fill="#fff" opacity=".85"/><rect x="40" y="145" width="2" height="2" fill="#b9b9b9"/><rect x="42" y="141" width="2" height="2" fill="#fff" opacity=".85"/><rect x="43" y="142" width="2" height="2" fill="#b9b9b9"/><rect x="45" y="144" width="2" height="2" fill="#fff" opacity=".85"/><rect x="46" y="145" width="2" height="2" fill="#b9b9b9"/>
<path d="M18.5,153.5L24.8,168.5L31.7,153.5H37.8" fill="none" stroke="#2c4c6a" stroke-width="1.4"/><circle cx="18.5" cy="153.5" r="1.9" fill="#fff" stroke="#2c4c6a" stroke-width="1.1"/><circle cx="24.8" cy="168.5" r="1.9" fill="#fff" stroke="#2c4c6a" stroke-width="1.1"/><circle cx="31.7" cy="153.5" r="1.9" fill="#fff" stroke="#2c4c6a" stroke-width="1.1"/><circle cx="37.8" cy="153.5" r="1.9" fill="#fff" stroke="#2c4c6a" stroke-width="1.1"/><g opacity="1"><rect x="30.8" y="165.8" width="10" height="10" rx="2" fill="#4b9a4b" stroke="#4b9a4b" stroke-width=".5"/><path d="M35.8,167.60000000000002V174.0M32.6,170.8H39.0" stroke="#fff" stroke-width="1.7"/></g>
<rect x="16" y="189" width="19" height="19" fill="#6b93c8"/><g fill="#1d3a5c"><rect x="16" y="189" width="6.3" height="6.3"/><rect x="28.6" y="189" width="6.3" height="6.3"/><rect x="22.3" y="195.3" width="6.3" height="6.3"/><rect x="16" y="201.6" width="6.3" height="6.3"/></g><g opacity="1"><rect x="30.5" y="203.5" width="10" height="10" rx="2" fill="#4b9a4b" stroke="#4b9a4b" stroke-width=".5"/><path d="M35.5,205.3V211.7M32.3,208.5H38.7" stroke="#fff" stroke-width="1.7"/></g>
<path d="M16.5,231C16.5,227.5 19,227.3 22,227.5L31,227.5C34,227.5 34.6,230 34.2,234C33.8,237 32.5,238 30.5,238.2L34,238.5L33.6,239.8L29.6,239.8C29.6,242 29.2,244.6 27,244.6C25,244.6 24.5,242 24.5,239.8C23,240.2 21,240.3 19,240C17.2,239 16.5,235 16.5,231Z" fill="#6a9ad0" stroke="#2a4e7e" stroke-width="1.1"/><path d="M21.5,229C20.6,233 21,237 22.5,239.5M28.6,231.5C27.6,234 28,236 29.8,237.5" fill="none" stroke="#2a4e7e" stroke-width="1"/><g opacity="1"><rect x="30.5" y="241.5" width="10" height="10" rx="2" fill="#4b9a4b" stroke="#4b9a4b" stroke-width=".5"/><path d="M35.5,243.3V249.7M32.3,246.5H38.7" stroke="#fff" stroke-width="1.7"/></g>
<path d="M17,289C20,278 28,269 39,265C36,274 30,282 21,286Z" fill="#8fb4e0" stroke="#2c4c78" stroke-width="1"/><path d="M17,289L36,268" stroke="#2c4c78" stroke-width=".8"/><g opacity="1"><rect x="30.5" y="279.5" width="10" height="10" rx="2" fill="#4b9a4b" stroke="#4b9a4b" stroke-width=".5"/><path d="M35.5,281.3V287.7M32.3,284.5H38.7" stroke="#fff" stroke-width="1.7"/></g>
<path d="M16,302C26,302 38,306 40,318L16,325C22,316 22,308 16,302Z" fill="#5b8fce" stroke="#1e3a5e" stroke-width="1"/><path d="M22,303Q27,312 23,322M28,304Q33,313 29,320M34,307Q37,314 34,319" fill="none" stroke="#1e3a5e" stroke-width=".8"/><g opacity="1"><rect x="30.5" y="317.5" width="10" height="10" rx="2" fill="#4b9a4b" stroke="#4b9a4b" stroke-width=".5"/><path d="M35.5,319.3V325.7M32.3,322.5H38.7" stroke="#fff" stroke-width="1.7"/></g>
<circle cx="27.7" cy="351.2" r="11" fill="#bcd2ec" stroke="#5b8fce" stroke-width="1.2"/><path d="M18.7,346.2H36.7M16.7,351.2H38.7M18.7,356.2H36.7" stroke="#5b8fce" stroke-width=".8"/><ellipse cx="27.7" cy="351.2" rx="5" ry="11" fill="none" stroke="#5b8fce" stroke-width=".8"/><path d="M21,347L25,344L27,349L23,352Z M28,345L32,344L32,349Z M27,354L30,358L28,360Z" fill="#2a4e7e"/><g opacity="1"><rect x="30.5" y="356" width="10" height="10" rx="2" fill="#4b9a4b" stroke="#4b9a4b" stroke-width=".5"/><path d="M35.5,357.8V364.2M32.3,361H38.7" stroke="#fff" stroke-width="1.7"/></g>
<circle cx="27.7" cy="389.3" r="11" fill="#2a4e7e" stroke="#2a4e7e" stroke-width="1.2"/><path d="M18.7,385.3H36.7M16.7,390.3H38.7M18.7,395.3H36.7" stroke="#fff" stroke-width="1.3"/><ellipse cx="27.7" cy="389.3" rx="5" ry="11" fill="none" stroke="#fff" stroke-width="1.2"/><path d="M17.7,388.3H37.7V392.3H17.7Z" fill="#5b8fce"/><g opacity="1"><rect x="30.5" y="394" width="10" height="10" rx="2" fill="#4b9a4b" stroke="#4b9a4b" stroke-width=".5"/><path d="M35.5,395.8V402.2M32.3,399H38.7" stroke="#fff" stroke-width="1.7"/></g>
<circle cx="27.7" cy="427.5" r="11" fill="#bcd2ec" stroke="#5b8fce" stroke-width="1.2"/><path d="M18.7,422.5H36.7M16.7,427.5H38.7M18.7,432.5H36.7" stroke="#5b8fce" stroke-width=".8"/><ellipse cx="27.7" cy="427.5" rx="5" ry="11" fill="none" stroke="#5b8fce" stroke-width=".8"/><path d="M20,421L26,434L31,421H36" fill="none" stroke="#1e3a5e" stroke-width="1.3"/><circle cx="20" cy="421" r="1.5" fill="#fff" stroke="#1e3a5e"/><circle cx="26" cy="434" r="1.5" fill="#fff" stroke="#1e3a5e"/><circle cx="31" cy="421" r="1.5" fill="#fff" stroke="#1e3a5e"/><circle cx="36" cy="421" r="1.5" fill="#fff" stroke="#1e3a5e"/><g opacity="1"><rect x="30.5" y="432" width="10" height="10" rx="2" fill="#4b9a4b" stroke="#4b9a4b" stroke-width=".5"/><path d="M35.5,433.8V440.2M32.3,437H38.7" stroke="#fff" stroke-width="1.7"/></g>
<path d="M24,458C31,455 36,462 32,468C29,472 25,474 22,475L21,474C25,471 27,469 28,466C24,467 19,462 24,458Z" fill="#5b8fce" stroke="#2c4c78" stroke-width=".8"/><g opacity="1"><rect x="30.5" y="469.5" width="10" height="10" rx="2" fill="#4b9a4b" stroke="#4b9a4b" stroke-width=".5"/><path d="M35.5,471.3V477.7M32.3,474.5H38.7" stroke="#fff" stroke-width="1.7"/></g>
<path d="M18.5,494.5L24.8,509.5L31.7,494.5H37.8" fill="none" stroke="#2c4c6a" stroke-width="1.4"/><circle cx="18.5" cy="494.5" r="1.9" fill="#fff" stroke="#2c4c6a" stroke-width="1.1"/><circle cx="24.8" cy="509.5" r="1.9" fill="#fff" stroke="#2c4c6a" stroke-width="1.1"/><circle cx="31.7" cy="494.5" r="1.9" fill="#fff" stroke="#2c4c6a" stroke-width="1.1"/><circle cx="37.8" cy="494.5" r="1.9" fill="#fff" stroke="#2c4c6a" stroke-width="1.1"/><g opacity="1"><rect x="30.8" y="506.8" width="10" height="10" rx="2" fill="#d4a90e" stroke="#d4a90e" stroke-width=".5"/><path d="M35.8,508.3V515.3M32.8,510.0L38.8,513.6M38.8,510.0L32.8,513.6" stroke="#fff" stroke-width="1.3"/><circle cx="35.8" cy="511.8" r="1.8" fill="#fff"/></g><path d="M42,505H50L46,512Z" fill="#555"/>
<rect x="17.5" y="533.5" width="19" height="19" fill="#ececec" stroke="#999"/><g opacity="1"><rect x="30.5" y="546" width="10" height="10" rx="2" fill="#e88a96" stroke="#e88a96" stroke-width=".5"/><path d="M32.5,551H38.5" stroke="#fff" stroke-width="2"/></g>
<rect x="12" y="570" width="2" height="2" fill="#fff" opacity=".85"/><rect x="13" y="571" width="2" height="2" fill="#b9b9b9"/><rect x="15" y="573" width="2" height="2" fill="#fff" opacity=".85"/><rect x="16" y="574" width="2" height="2" fill="#b9b9b9"/><rect x="18" y="570" width="2" height="2" fill="#fff" opacity=".85"/><rect x="19" y="571" width="2" height="2" fill="#b9b9b9"/><rect x="21" y="573" width="2" height="2" fill="#fff" opacity=".85"/><rect x="22" y="574" width="2" height="2" fill="#b9b9b9"/><rect x="24" y="570" width="2" height="2" fill="#fff" opacity=".85"/><rect x="25" y="571" width="2" height="2" fill="#b9b9b9"/><rect x="27" y="573" width="2" height="2" fill="#fff" opacity=".85"/><rect x="28" y="574" width="2" height="2" fill="#b9b9b9"/><rect x="30" y="570" width="2" height="2" fill="#fff" opacity=".85"/><rect x="31" y="571" width="2" height="2" fill="#b9b9b9"/><rect x="33" y="573" width="2" height="2" fill="#fff" opacity=".85"/><rect x="34" y="574" width="2" height="2" fill="#b9b9b9"/><rect x="36" y="570" width="2" height="2" fill="#fff" opacity=".85"/><rect x="37" y="571" width="2" height="2" fill="#b9b9b9"/><rect x="39" y="573" width="2" height="2" fill="#fff" opacity=".85"/><rect x="40" y="574" width="2" height="2" fill="#b9b9b9"/><rect x="42" y="570" width="2" height="2" fill="#fff" opacity=".85"/><rect x="43" y="571" width="2" height="2" fill="#b9b9b9"/><rect x="45" y="573" width="2" height="2" fill="#fff" opacity=".85"/><rect x="46" y="574" width="2" height="2" fill="#b9b9b9"/>
<path d="M59,168H68L63.5,175.5Z" fill="#8a8a8a"/>
<defs><linearGradient id="cb0" x1="0" y1="0" x2="0" y2="1"><stop offset="0" stop-color="#f4f6f8"/><stop offset="1" stop-color="#b4c0cc"/></linearGradient></defs>
<rect x="80.5" y="164.5" width="13" height="13" rx="2.5" fill="url(#cb0)" stroke="#565a70" stroke-width="1"/>
<path d="M83.5,170L87,174L94,162.5" fill="none" stroke="#1c2a3a" stroke-width="2.6" stroke-linecap="round" stroke-linejoin="round"/>
<g fill="#fff" stroke="#555" stroke-width=".7"><path d="M119.4,163.4l1.5,1.5l-1.5,1.5l-1.5,-1.5z"/><path d="M112.5,166.4l1.5,1.5l-1.5,1.5l-1.5,-1.5z"/><path d="M110.4,173.4l1.5,1.5l-1.5,1.5l-1.5,-1.5z"/></g>
<circle cx="106" cy="189.9" r="3" fill="#5cc0b8" stroke="#1a1a1a" stroke-width="1"/>
<path d="M59,206H68L63.5,213.5Z" fill="#8a8a8a"/>
<defs><linearGradient id="cb1" x1="0" y1="0" x2="0" y2="1"><stop offset="0" stop-color="#f4f6f8"/><stop offset="1" stop-color="#b4c0cc"/></linearGradient></defs>
<rect x="80.5" y="202.5" width="13" height="13" rx="2.5" fill="url(#cb1)" stroke="#565a70" stroke-width="1"/>
<path d="M83.5,208L87,212L94,200.5" fill="none" stroke="#1c2a3a" stroke-width="2.6" stroke-linecap="round" stroke-linejoin="round"/>
<g fill="#fff" stroke="#555" stroke-width=".7"><path d="M119.4,201.4l1.5,1.5l-1.5,1.5l-1.5,-1.5z"/><path d="M112.5,204.4l1.5,1.5l-1.5,1.5l-1.5,-1.5z"/><path d="M110.4,211.4l1.5,1.5l-1.5,1.5l-1.5,-1.5z"/></g>
<circle cx="106" cy="228" r="5.8" fill="#bd2424" stroke="#1a1a1a" stroke-width="1"/>
<path d="M59,244H68L63.5,251.5Z" fill="#8a8a8a"/>
<defs><linearGradient id="cb2" x1="0" y1="0" x2="0" y2="1"><stop offset="0" stop-color="#f4f6f8"/><stop offset="1" stop-color="#b4c0cc"/></linearGradient></defs>
<rect x="80.5" y="240.5" width="13" height="13" rx="2.5" fill="url(#cb2)" stroke="#565a70" stroke-width="1"/>
<path d="M83.5,246L87,250L94,238.5" fill="none" stroke="#1c2a3a" stroke-width="2.6" stroke-linecap="round" stroke-linejoin="round"/>
<path d="M107.6,243.5 C107.8,241 110,240.4 112.5,241 C114.5,241.6 115.5,242.6 117.5,242.2 C119.5,241.4 121.5,241 122.4,243.5 C123.2,245.5 123,248 121.5,249.6 C120,250.2 118.5,248 116,247.4 C113.5,247 112,250 110,251.6 C108,252 107.4,250 107.4,248 Z" fill="#e2e2e2" stroke="#7a7a7a" stroke-width=".9"/>
<rect x="98.5" y="258.5" width="14" height="14" fill="#cccccc" stroke="#bdbdbd" stroke-width="1"/>
<path d="M59,282H68L63.5,289.5Z" fill="#8a8a8a"/>
<defs><linearGradient id="cb3" x1="0" y1="0" x2="0" y2="1"><stop offset="0" stop-color="#f4f6f8"/><stop offset="1" stop-color="#b4c0cc"/></linearGradient></defs>
<rect x="80.5" y="278.5" width="13" height="13" rx="2.5" fill="url(#cb3)" stroke="#565a70" stroke-width="1"/>
<path d="M83.5,284L87,288L94,276.5" fill="none" stroke="#1c2a3a" stroke-width="2.6" stroke-linecap="round" stroke-linejoin="round"/>
<path d="M107.6,281.5 C107.8,279 110,278.4 112.5,279 C114.5,279.6 115.5,280.6 117.5,280.2 C119.5,279.4 121.5,279 122.4,281.5 C123.2,283.5 123,286 121.5,287.6 C120,288.2 118.5,286 116,285.4 C113.5,285 112,288 110,289.6 C108,290 107.4,288 107.4,286 Z" fill="#e2e2e2" stroke="#7a7a7a" stroke-width=".9"/>
<rect x="98.5" y="296.5" width="14" height="14" fill="#5fd232" stroke="#333" stroke-width="1"/>
<path d="M59,320H68L63.5,327.5Z" fill="#8a8a8a"/>
<defs><linearGradient id="cb4" x1="0" y1="0" x2="0" y2="1"><stop offset="0" stop-color="#f4f6f8"/><stop offset="1" stop-color="#b4c0cc"/></linearGradient></defs>
<rect x="80.5" y="316.5" width="13" height="13" rx="2.5" fill="url(#cb4)" stroke="#565a70" stroke-width="1"/>
<path d="M83.5,322L87,326L94,314.5" fill="none" stroke="#1c2a3a" stroke-width="2.6" stroke-linecap="round" stroke-linejoin="round"/>
<path d="M107.6,319.5 C107.8,317 110,316.4 112.5,317 C114.5,317.6 115.5,318.6 117.5,318.2 C119.5,317.4 121.5,317 122.4,319.5 C123.2,321.5 123,324 121.5,325.6 C120,326.2 118.5,324 116,323.4 C113.5,323 112,326 110,327.6 C108,328 107.4,326 107.4,324 Z" fill="#e2e2e2" stroke="#7a7a7a" stroke-width=".9"/>
<rect x="98.5" y="334.5" width="14" height="14" fill="#a57fc0" stroke="#555" stroke-width="1"/>
<path d="M59,358H68L63.5,365.5Z" fill="#8a8a8a"/>
<defs><linearGradient id="cb5" x1="0" y1="0" x2="0" y2="1"><stop offset="0" stop-color="#f4f6f8"/><stop offset="1" stop-color="#b4c0cc"/></linearGradient></defs>
<rect x="80.5" y="354.5" width="13" height="13" rx="2.5" fill="url(#cb5)" stroke="#565a70" stroke-width="1"/>
<path d="M83.5,360L87,364L94,352.5" fill="none" stroke="#1c2a3a" stroke-width="2.6" stroke-linecap="round" stroke-linejoin="round"/>
<path d="M107.6,357.5 C107.8,355 110,354.4 112.5,355 C114.5,355.6 115.5,356.6 117.5,356.2 C119.5,355.4 121.5,355 122.4,357.5 C123.2,359.5 123,362 121.5,363.6 C120,364.2 118.5,362 116,361.4 C113.5,361 112,364 110,365.6 C108,366 107.4,364 107.4,362 Z" fill="#e2e2e2" stroke="#7a7a7a" stroke-width=".9"/>
<rect x="98.5" y="372.5" width="14" height="14" fill="#f21f3c" stroke="#555" stroke-width="1"/>
<path d="M59,396H68L63.5,403.5Z" fill="#8a8a8a"/>
<defs><linearGradient id="cb6" x1="0" y1="0" x2="0" y2="1"><stop offset="0" stop-color="#f4f6f8"/><stop offset="1" stop-color="#b4c0cc"/></linearGradient></defs>
<rect x="80.5" y="392.5" width="13" height="13" rx="2.5" fill="url(#cb6)" stroke="#565a70" stroke-width="1"/>
<path d="M83.5,398L87,402L94,390.5" fill="none" stroke="#1c2a3a" stroke-width="2.6" stroke-linecap="round" stroke-linejoin="round"/>
<path d="M107.6,395.5 C107.8,393 110,392.4 112.5,393 C114.5,393.6 115.5,394.6 117.5,394.2 C119.5,393.4 121.5,393 122.4,395.5 C123.2,397.5 123,400 121.5,401.6 C120,402.2 118.5,400 116,399.4 C113.5,399 112,402 110,403.6 C108,404 107.4,402 107.4,400 Z" fill="#e2e2e2" stroke="#7a7a7a" stroke-width=".9"/>
<rect x="98.5" y="410.5" width="14" height="14" fill="#f5b5d5" stroke="#666" stroke-width="1"/>
<path d="M59,434H68L63.5,441.5Z" fill="#8a8a8a"/>
<defs><linearGradient id="cb7" x1="0" y1="0" x2="0" y2="1"><stop offset="0" stop-color="#f4f6f8"/><stop offset="1" stop-color="#b4c0cc"/></linearGradient></defs>
<rect x="80.5" y="430.5" width="13" height="13" rx="2.5" fill="url(#cb7)" stroke="#565a70" stroke-width="1"/>
<path d="M83.5,436L87,440L94,428.5" fill="none" stroke="#1c2a3a" stroke-width="2.6" stroke-linecap="round" stroke-linejoin="round"/>
<path d="M108,431L112,441L116,431L121,429" fill="none" stroke="#777" stroke-width=".9"/><circle cx="121" cy="429" r="1.2" fill="#fff" stroke="#777" stroke-width=".6"/>
<path d="M98,456.5H114" stroke="#a35ef0" stroke-width="1.2"/>
<circle cx="61.8" cy="146" r="6.8" fill="#4a4a4a"/><path d="M59,143.2L64.6,148.8M64.6,143.2L59,148.8" stroke="#fff" stroke-width="1.8"/>
<circle cx="81.8" cy="146" r="6.8" fill="#4a4a4a"/><rect x="78.5" y="145" width="5.5" height="4" fill="none" stroke="#fff" stroke-width="1.1"/><path d="M80.5,145V143H85.5V147H84" fill="none" stroke="#fff" stroke-width="1.1"/>
<rect x="1121.5" y="1152.5" width="18" height="18" fill="#f4f4f4" stroke="#888"/><path d="M1125,1156C1128,1154 1132,1155 1133,1158C1135,1161 1134,1165 1131,1167C1128,1168 1125,1165 1127,1162" fill="none" stroke="#222" stroke-width="1.6"/><circle cx="1131" cy="1164" r="2" fill="#222"/>
<rect x="1682.5" y="1152.5" width="19" height="19" fill="#f2f2f2" stroke="#888"/><circle cx="1689" cy="1159" r="3.3" fill="none" stroke="#e02020" stroke-width="1.3"/><path d="M1687,1161L1691,1157" stroke="#e02020" stroke-width="1.2"/><path d="M1685,1169Q1692,1165 1699,1154" stroke="#666" stroke-width="2.2" fill="none"/>
<defs><linearGradient id="cbr" x1="0" y1="0" x2="0" y2="1"><stop offset="0" stop-color="#f4f6f8"/><stop offset="1" stop-color="#b4c0cc"/></linearGradient></defs><rect x="1708.5" y="1155.5" width="13" height="13" rx="2.5" fill="url(#cbr)" stroke="#565a70"/><path d="M1711.5,1160L1715,1164L1722,1153.5" fill="none" stroke="#1c2a3a" stroke-width="2.6" stroke-linecap="round" stroke-linejoin="round"/>
<rect x="1852.5" y="1153.5" width="19" height="17" fill="#f2f2f2" stroke="#888"/><circle cx="1862" cy="1162" r="6.5" fill="none" stroke="#888" stroke-width="1.6"/><rect x="1859.5" y="1159.5" width="5" height="5" fill="#ddd" stroke="#888" stroke-width=".8"/>
<rect x="1878.5" y="1152.5" width="19" height="19" fill="#f2f2f2" stroke="#888"/><path d="M1888,1156L1894,1168H1882Z" fill="#f6f2b0" stroke="#555" stroke-width=".8" stroke-linejoin="round"/><path d="M1888,1159.5V1164M1888,1165.5V1167" stroke="#222" stroke-width="1.4"/>
<path d="M1665,1162H1670.5L1667.75,1165.5Z" fill="#444"/><path d="M1661.5,1157V1171" stroke="#c0c0c0"/>
<path d="M1912,1177L1922,1167M1916,1177L1922,1171M1920,1177L1922,1175" stroke="#999" stroke-width="1"/>
</svg>
<svg class="a" style="left:0;top:0" width="1927" height="1181" viewBox="0 0 1927 1181">
<defs><clipPath id="mc"><rect x="348" y="135" width="1576" height="1010"/></clipPath></defs>
<g clip-path="url(#mc)" stroke="#1a1a1a" stroke-width="1" stroke-linejoin="round">
<path d="M659.4,290.2 L698.7,270.7 L759.7,242.7 L830.8,216.0 L902.0,197.0 L966.5,184.3 L1004.0,183.0 L1077.0,198.3 L1121.0,233.3 L1107.0,238.4 L1081.6,256.7 L1067.6,294.8 L1064.6,319.0 L1048.6,340.5 L1038.4,359.6 L1035.0,373.5 L1035.0,395.0 L900.0,400.0 L716.0,454.3 L674.6,404.0 L640.3,349.4 L646.2,308.0Z" fill="#f3b0d0"/>
<path d="M1107.0,238.4 L1182.0,219.0 L1215.6,200.8 L1242.7,177.4 L1276.5,168.5 L1305.2,158.9 L1374.3,165.7 L1448.7,186.3 L1500.0,300.0 L1300.0,400.0 L1035.0,395.0 L1035.0,373.5 L1038.4,359.6 L1048.6,340.5 L1064.6,319.0 L1067.6,294.8 L1081.6,256.7Z" fill="#f3b0d0"/>
<path d="M731.8,802.9 L721.6,828.3 L722.9,855.0 L734.3,891.8 L734.3,927.8 L697.8,996.6 L652.9,1032.4 L644.9,1062.1 L655.6,1081.1 L734.4,1107.0 L838.0,1120.7 L976.2,1106.7 L1045.0,1108.7 L1090.4,1105.5 L1172.5,1063.8 L1255.5,998.2 L1263.5,990.9 L1296.6,946.3 L1315.3,887.3 L1338.3,802.4 L1321.1,800.9 L1272.1,787.1 L1219.7,777.3 L1173.0,790.7 L1131.6,817.3 L1124.8,837.2 L1105.2,867.6 L1066.4,900.7 L1032.0,922.3 L968.6,954.8 L940.6,957.0 L915.2,947.7 L886.7,938.3 L874.0,927.3 L865.9,913.4 L865.1,903.2 L879.0,862.0 L758.4,829.0Z" fill="#68d232"/>
<path d="M730.5,434.0 L767.3,412.0 L848.6,390.0 L901.4,372.0 L960.2,390.5 L994.5,393.3 L1010.0,369.0 L1072.0,381.1 L1094.3,390.0 L1138.8,410.4 L1163.0,422.3 L1183.8,456.3 L1172.4,472.0 L1140.6,493.7 L1109.7,521.6 L1112.7,539.9 L1181.3,558.4 L1227.0,555.9 L1310.8,564.8 L1336.2,583.8 L1308.3,627.0 L1243.5,673.5 L1190.2,689.2 L1127.9,698.1 L1060.0,745.2 L1057.0,823.2 L1038.4,847.8 L944.5,875.3 L900.0,867.6 L879.0,862.0 L758.4,829.0 L726.7,797.0 L699.2,779.2 L677.9,742.7 L636.5,695.6 L636.5,639.7 L659.4,576.2 L667.8,534.3 L692.4,497.5 L708.4,465.7Z" fill="#68d232"/>
<path d="M1094.3,390.0 L1126.0,362.9 L1137.5,358.8 L1196.0,305.5 L1223.2,303.2 L1290.5,275.2 L1348.4,284.6 L1369.2,289.2 L1416.2,315.1 L1434.8,340.5 L1407.3,401.5 L1416.2,423.8 L1416.3,461.9 L1385.7,500.8 L1366.7,529.7 L1335.0,561.7 L1303.2,563.5 L1227.0,555.9 L1181.3,558.4 L1112.7,539.9 L1109.7,521.6 L1140.6,493.7 L1172.4,472.0 L1183.8,456.3 L1163.0,422.3 L1138.8,410.4Z" fill="#68d232"/>
<path d="M1348.4,284.6 L1368.0,249.0 L1383.2,232.6 L1425.1,200.8 L1476.0,171.6 L1502.9,169.0 L1572.2,191.4 L1588.0,211.0 L1608.3,222.4 L1624.8,252.9 L1633.7,291.0 L1622.3,324.0 L1586.7,352.0 L1537.2,411.6 L1533.7,442.9 L1545.1,464.4 L1552.2,497.5 L1552.2,536.8 L1518.4,585.1 L1504.5,608.0 L1498.1,630.8 L1468.9,671.5 L1457.5,634.6 L1433.4,608.0 L1417.3,548.3 L1385.7,500.8 L1416.3,461.9 L1416.2,423.8 L1407.3,401.5 L1434.8,340.5 L1416.2,315.1 L1369.2,289.2Z" fill="#68d232"/>
<path d="M879.0,862.0 L900.0,867.6 L944.5,875.3 L1038.4,847.8 L1057.0,823.2 L1060.0,745.2 L1127.9,698.1 L1190.2,689.2 L1243.5,673.5 L1308.3,627.0 L1336.2,583.8 L1310.8,564.8 L1227.0,555.9 L1303.2,563.5 L1335.0,561.7 L1366.7,529.7 L1385.7,500.8 L1417.3,548.3 L1433.4,608.0 L1457.5,634.6 L1468.9,671.5 L1477.4,716.0 L1465.9,747.7 L1413.2,792.3 L1370.0,803.8 L1338.3,802.4 L1321.1,800.9 L1272.1,787.1 L1219.7,777.3 L1173.0,790.7 L1131.6,817.3 L1124.8,837.2 L1105.2,867.6 L1066.4,900.7 L1032.0,922.3 L968.6,954.8 L940.6,957.0 L915.2,947.7 L886.7,938.3 L874.0,927.3 L865.9,913.4 L865.1,903.2Z" fill="#f3b0d0"/>
<g opacity="0.216"><path d="M879.0,862.0 L900.0,867.6 L944.5,875.3 L1038.4,847.8 L1057.0,823.2 L1060.0,745.2 L1127.9,698.1 L1190.2,689.2 L1243.5,673.5 L1308.3,627.0 L1336.2,583.8 L1310.8,564.8 L1227.0,555.9 L1303.2,563.5 L1335.0,561.7 L1366.7,529.7 L1385.7,500.8 L1417.3,548.3 L1433.4,608.0 L1457.5,634.6 L1468.9,671.5 L1477.4,716.0 L1465.9,747.7 L1413.2,792.3 L1370.0,803.8 L1338.3,802.4 L1321.1,800.9 L1272.1,787.1 L1219.7,777.3 L1173.0,790.7 L1131.6,817.3 L1124.8,837.2 L1105.2,867.6 L1066.4,900.7 L1032.0,922.3 L968.6,954.8 L940.6,957.0 L915.2,947.7 L886.7,938.3 L874.0,927.3 L865.9,913.4 L865.1,903.2Z" fill="#000" stroke="#000" stroke-width="39" stroke-linejoin="round"/></g>
<path d="M879.0,862.0 L900.0,867.6 L944.5,875.3 L1038.4,847.8 L1057.0,823.2 L1060.0,745.2 L1127.9,698.1 L1190.2,689.2 L1243.5,673.5 L1308.3,627.0 L1336.2,583.8 L1310.8,564.8 L1227.0,555.9 L1303.2,563.5 L1335.0,561.7 L1366.7,529.7 L1385.7,500.8 L1417.3,548.3 L1433.4,608.0 L1457.5,634.6 L1468.9,671.5 L1477.4,716.0 L1465.9,747.7 L1413.2,792.3 L1370.0,803.8 L1338.3,802.4 L1321.1,800.9 L1272.1,787.1 L1219.7,777.3 L1173.0,790.7 L1131.6,817.3 L1124.8,837.2 L1105.2,867.6 L1066.4,900.7 L1032.0,922.3 L968.6,954.8 L940.6,957.0 L915.2,947.7 L886.7,938.3 L874.0,927.3 L865.9,913.4 L865.1,903.2Z" fill="none"/>
<path d="M661,246 L687.3,260.5 L700,270.6" fill="none" stroke="#a35ef0"/>
<path d="M1255.5,998.2 L1300,1019.3 L1324.3,1020.5 L1360.7,1029.8 L1389,1027.4" fill="none" stroke="#a35ef0"/>
<circle cx="927" cy="281.8" r="5.5" fill="#d22a28" stroke="#000" stroke-width="1.2"/>
<circle cx="1018.9" cy="285.9" r="5.5" fill="#d22a28" stroke="#000" stroke-width="1.2"/>
<circle cx="1048.9" cy="302.7" r="5.5" fill="#d22a28" stroke="#000" stroke-width="1.2"/>
<circle cx="1007" cy="312.9" r="5.5" fill="#d22a28" stroke="#000" stroke-width="1.2"/>
<circle cx="1030.9" cy="341.8" r="5.5" fill="#d22a28" stroke="#000" stroke-width="1.2"/>
<circle cx="872.7" cy="399.7" r="2.6" fill="#68c0bc" stroke="#000" stroke-width="1"/>
<circle cx="913.9" cy="415.7" r="2.6" fill="#68c0bc" stroke="#000" stroke-width="1"/>
<circle cx="899.7" cy="428.6" r="2.6" fill="#68c0bc" stroke="#000" stroke-width="1"/>
<circle cx="840" cy="432.4" r="2.6" fill="#68c0bc" stroke="#000" stroke-width="1"/>
<circle cx="878.8" cy="462.7" r="2.6" fill="#68c0bc" stroke="#000" stroke-width="1"/>
<circle cx="797.8" cy="519" r="2.6" fill="#68c0bc" stroke="#000" stroke-width="1"/>
<circle cx="824.7" cy="520.8" r="2.6" fill="#68c0bc" stroke="#000" stroke-width="1"/>
<circle cx="820.7" cy="557.2" r="2.6" fill="#68c0bc" stroke="#000" stroke-width="1"/>
<circle cx="1087" cy="299.9" r="2.6" fill="#68c0bc" stroke="#000" stroke-width="1"/>
<circle cx="1373.8" cy="431.9" r="2.6" fill="#68c0bc" stroke="#000" stroke-width="1"/>
<circle cx="1323.8" cy="481.7" r="2.6" fill="#68c0bc" stroke="#000" stroke-width="1"/>
<circle cx="1272.7" cy="509.7" r="2.6" fill="#68c0bc" stroke="#000" stroke-width="1"/>
<circle cx="1321.7" cy="526.7" r="2.6" fill="#68c0bc" stroke="#000" stroke-width="1"/>
<circle cx="982.9" cy="728.8" r="2.6" fill="#68c0bc" stroke="#000" stroke-width="1"/>
<circle cx="1025" cy="719.8" r="2.6" fill="#68c0bc" stroke="#000" stroke-width="1"/>
<circle cx="964.9" cy="594.7" r="2.6" fill="#68c0bc" stroke="#000" stroke-width="1"/>
<circle cx="954" cy="654.9" r="2.6" fill="#68c0bc" stroke="#000" stroke-width="1"/>
<circle cx="964.9" cy="675.8" r="2.6" fill="#68c0bc" stroke="#000" stroke-width="1"/>
<circle cx="1039.9" cy="674" r="2.6" fill="#68c0bc" stroke="#000" stroke-width="1"/>
<circle cx="927" cy="281.8" r="2.6" fill="#68c0bc" stroke="#000" stroke-width="1"/>
<circle cx="1018.9" cy="285.9" r="2.6" fill="#68c0bc" stroke="#000" stroke-width="1"/>
<circle cx="1048.9" cy="302.7" r="2.6" fill="#68c0bc" stroke="#000" stroke-width="1"/>
<circle cx="1007" cy="312.9" r="2.6" fill="#68c0bc" stroke="#000" stroke-width="1"/>
<circle cx="1030.9" cy="341.8" r="2.6" fill="#68c0bc" stroke="#000" stroke-width="1"/>
</g>
<g font-family="Liberation Sans" font-size="13" text-anchor="middle" fill="#000" stroke-linejoin="round">
<text x="897" y="300.6" stroke="#fff" stroke-width="3" paint-order="stroke">KwaZulu</text>
<text x="1252" y="256.2" stroke="#fff" stroke-width="3" paint-order="stroke">Germania</text>
<text x="1533.4" y="371.3" stroke="#fff" stroke-width="3" paint-order="stroke">Saskatchewan</text>
<text x="1300.6" y="420.0" stroke="#fff" stroke-width="3" paint-order="stroke">Missouri</text>
<text x="969" y="610.1" stroke="#fff" stroke-width="3" paint-order="stroke">Queensland</text>
<text x="1257.2" y="744.2" stroke="#fff" stroke-width="3" paint-order="stroke">Hokkaido</text>
<text x="1013.8" y="968.3000000000001" stroke="#fff" stroke-width="3" paint-order="stroke">Wales</text>
</g></svg>
</body></html>
